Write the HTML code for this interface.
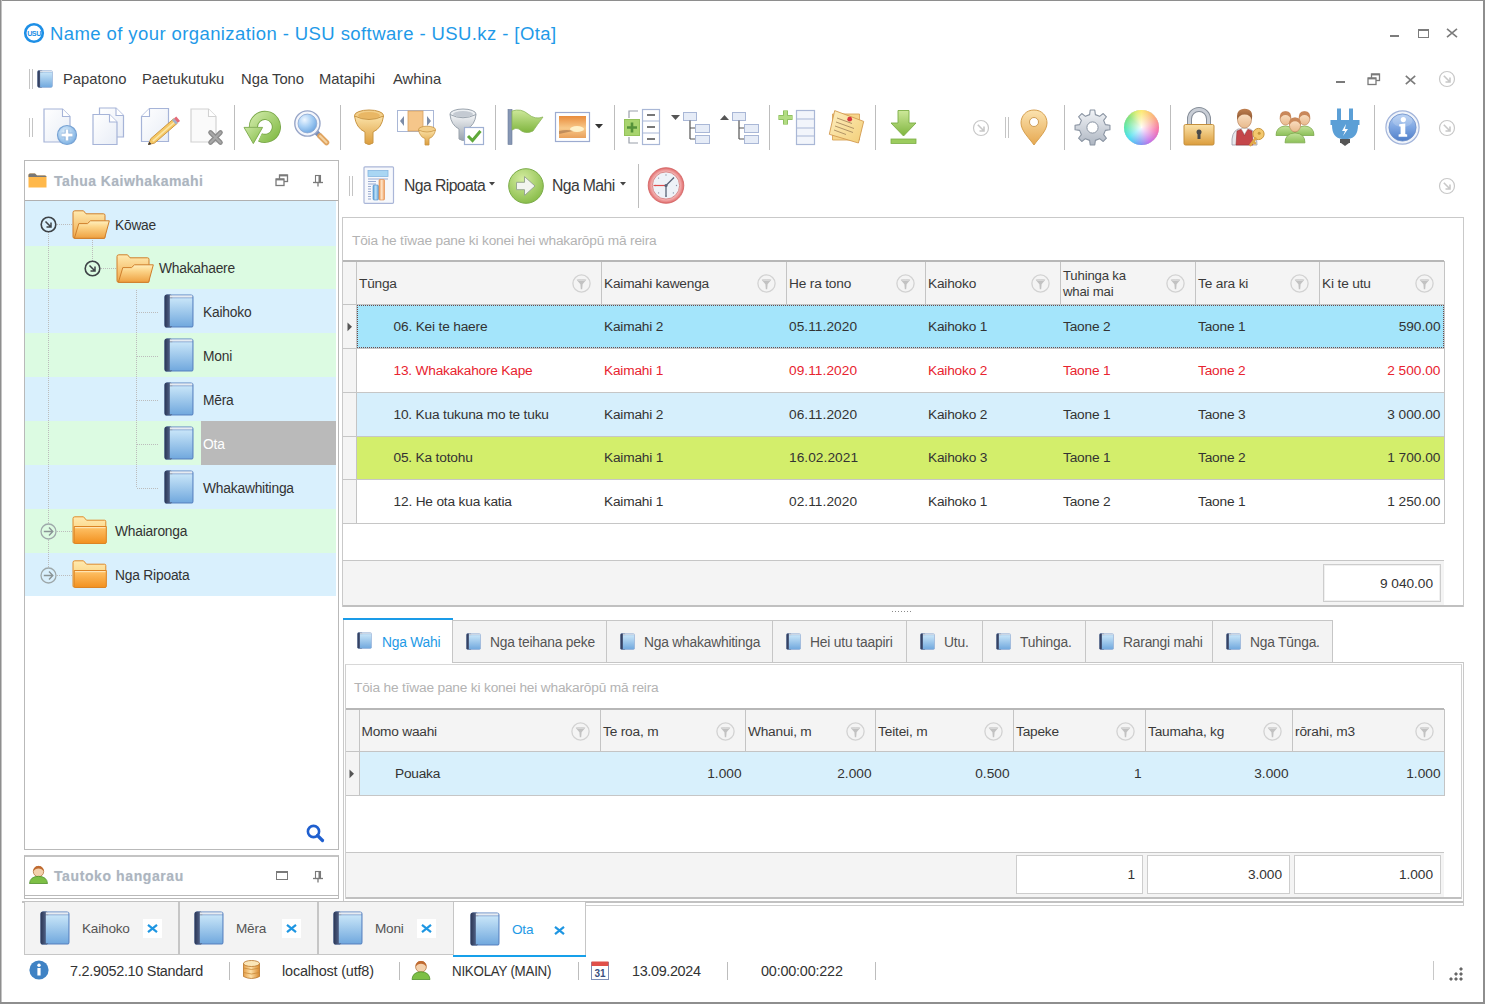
<!DOCTYPE html><html><head><meta charset="utf-8"><style>
html,body{margin:0;padding:0;} body{width:1485px;height:1004px;position:relative;overflow:hidden;background:#fff;font-family:"Liberation Sans", sans-serif;} div{box-sizing:border-box} svg{overflow:visible}
</style></head><body>
<svg width="0" height="0" style="position:absolute">
<defs>
<linearGradient id="gBook" x1="0" y1="0" x2="0" y2="1"><stop offset="0" stop-color="#c8e5f8"/><stop offset="1" stop-color="#72a9de"/></linearGradient>
<linearGradient id="gBookSp" x1="0" y1="0" x2="1" y2="0"><stop offset="0" stop-color="#2a3554"/><stop offset="0.6" stop-color="#4a5a7e"/><stop offset="1" stop-color="#3c4a6c"/></linearGradient>
<linearGradient id="gFolder" x1="0" y1="0" x2="0" y2="1"><stop offset="0" stop-color="#fde3a0"/><stop offset="1" stop-color="#f0a640"/></linearGradient>
<linearGradient id="gFolderB" x1="0" y1="0" x2="0" y2="1"><stop offset="0" stop-color="#f9cf78"/><stop offset="1" stop-color="#e88a2a"/></linearGradient>
<linearGradient id="gFolderC" x1="0" y1="0" x2="0" y2="1"><stop offset="0" stop-color="#ffd27a"/><stop offset="1" stop-color="#f39a26"/></linearGradient>
<linearGradient id="gPage" x1="0" y1="0" x2="1" y2="1"><stop offset="0" stop-color="#ffffff"/><stop offset="1" stop-color="#e8edf6"/></linearGradient>
<linearGradient id="gGreen" x1="0" y1="0" x2="0" y2="1"><stop offset="0" stop-color="#cde89a"/><stop offset="1" stop-color="#7fb53e"/></linearGradient>
<linearGradient id="gGold" x1="0" y1="0" x2="0" y2="1"><stop offset="0" stop-color="#fbe2a8"/><stop offset="1" stop-color="#dc9d3c"/></linearGradient>
<linearGradient id="gSilver" x1="0" y1="0" x2="0" y2="1"><stop offset="0" stop-color="#f4f6f8"/><stop offset="1" stop-color="#9aa3ad"/></linearGradient>
<radialGradient id="gBlueBall" cx="0.4" cy="0.35" r="0.7"><stop offset="0" stop-color="#e3f1fc"/><stop offset="1" stop-color="#78aee2"/></radialGradient>
<radialGradient id="gInfo" cx="0.5" cy="0.3" r="0.7"><stop offset="0" stop-color="#8fb8ea"/><stop offset="1" stop-color="#3d73c2"/></radialGradient>
<radialGradient id="gGreenBall" cx="0.45" cy="0.35" r="0.7"><stop offset="0" stop-color="#c8e69a"/><stop offset="1" stop-color="#6fae35"/></radialGradient>
<radialGradient id="gClock" cx="0.5" cy="0.5" r="0.5"><stop offset="0.7" stop-color="#ffffff"/><stop offset="1" stop-color="#e6e6e6"/></radialGradient>
</defs></svg>
<div style="position:absolute;left:0px;top:0px;width:1485px;height:1px;background:#8e8e8e"></div>
<div style="position:absolute;left:0px;top:0px;width:1px;height:1004px;background:#8e8e8e"></div>
<div style="position:absolute;left:1px;top:0px;width:1px;height:1004px;background:#c4c4c4"></div>
<div style="position:absolute;left:1483px;top:0px;width:2px;height:1004px;background:#8e8e8e"></div>
<div style="position:absolute;left:0px;top:1002px;width:1485px;height:2px;background:#8e8e8e"></div>
<svg style="position:absolute;left:23px;top:21.5px" width="22" height="22" viewBox="0 0 22 22"><circle cx="11" cy="11" r="8.8" fill="#fff" stroke="#1d8fe6" stroke-width="2.6"/><text x="11" y="13.6" font-size="7.2" font-weight="bold" text-anchor="middle" fill="#1d8fe6" font-family="Liberation Sans" letter-spacing="-0.5">USU</text></svg>
<div style="position:absolute;left:50px;top:24.62px;font-size:18.53px;line-height:18.53px;color:#1f9ae8;white-space:nowrap;letter-spacing:0.401px;">Name of your organization - USU software - USU.kz - [Ota]</div>
<div style="position:absolute;left:1390px;top:35px;width:9px;height:2.4px;background:#7c7c7c"></div>
<div style="position:absolute;left:1418px;top:29px;width:11px;height:9px;border:1.3px solid #7c7c7c;border-top-width:2.4px"></div>
<svg style="position:absolute;left:1446px;top:28px" width="12" height="10" viewBox="0 0 12 10"><path d="M1 0.8 L11 9.2 M11 0.8 L1 9.2" stroke="#7c7c7c" stroke-width="1.6"/></svg>
<div style="position:absolute;left:29px;top:69px;width:1px;height:20px;background:#c4c4c4"></div>
<div style="position:absolute;left:32px;top:69px;width:1px;height:20px;background:#c4c4c4"></div>
<svg style="position:absolute;left:37px;top:70px" width="16" height="18" viewBox="0 0 16 18"><rect x="0.5" y="0.5" width="15" height="17" rx="1.39" fill="#5a84c2"/>
<rect x="0.5" y="0.5" width="5.09" height="17" rx="1.39" fill="url(#gBookSp)"/>
<rect x="3.09" y="2.24" width="12.05" height="14.91" fill="url(#gBook)"/>
<rect x="3.09" y="0.69" width="12.05" height="1.23" fill="#e6ebf1"/></svg>
<div style="position:absolute;left:63px;top:72.47px;font-size:14.80px;line-height:14.80px;color:#3b3b3b;white-space:nowrap;letter-spacing:0.000px;">Papatono</div>
<div style="position:absolute;left:142px;top:72.47px;font-size:14.80px;line-height:14.80px;color:#3b3b3b;white-space:nowrap;letter-spacing:0.000px;">Paetukutuku</div>
<div style="position:absolute;left:241px;top:72.47px;font-size:14.80px;line-height:14.80px;color:#3b3b3b;white-space:nowrap;letter-spacing:0.000px;">Nga Tono</div>
<div style="position:absolute;left:319px;top:72.47px;font-size:14.80px;line-height:14.80px;color:#3b3b3b;white-space:nowrap;letter-spacing:0.000px;">Matapihi</div>
<div style="position:absolute;left:393px;top:72.47px;font-size:14.80px;line-height:14.80px;color:#3b3b3b;white-space:nowrap;letter-spacing:0.000px;">Awhina</div>
<div style="position:absolute;left:1336px;top:81px;width:9px;height:2.4px;background:#7a7a7a"></div>
<svg style="position:absolute;left:1367px;top:73px" width="14" height="13" viewBox="0 0 14 13"><rect x="4.5" y="1" width="8" height="6.5" fill="none" stroke="#7a7a7a" stroke-width="1.3"/><rect x="4.5" y="0.6" width="8" height="1.8" fill="#7a7a7a"/><rect x="1" y="5" width="8" height="6.5" fill="#fff" stroke="#7a7a7a" stroke-width="1.3"/><rect x="1" y="4.6" width="8" height="1.8" fill="#7a7a7a"/></svg>
<svg style="position:absolute;left:1405px;top:75px" width="11" height="10" viewBox="0 0 11 10"><path d="M0.8 0.8 L10.2 9.2 M10.2 0.8 L0.8 9.2" stroke="#7a7a7a" stroke-width="1.6"/></svg>
<svg style="position:absolute;left:1438px;top:70px" width="18" height="18" viewBox="0 0 18 18"><circle cx="9" cy="9" r="7.5" fill="none" stroke="#c8c8c8" stroke-width="1.2"/><path d="M5.8 5.8 L12 12 M12 7.5 L12 12 L7.5 12" stroke="#c8c8c8" stroke-width="1.6" fill="none"/></svg>
<div style="position:absolute;left:29px;top:118px;width:1px;height:19px;background:#c4c4c4"></div>
<div style="position:absolute;left:32px;top:118px;width:1px;height:19px;background:#c4c4c4"></div>
<svg style="position:absolute;left:43px;top:108px" width="36" height="38" viewBox="0 0 36 38"><path d="M1.0 1.0 L19.5 1.0 L27.0 8.5 L27.0 34.0 L1.0 34.0 Z" fill="url(#gPage)" stroke="#a6b4d8" stroke-width="1.2"/><path d="M19.5 1.0 L19.5 8.5 L27.0 8.5" fill="#fff" stroke="#a6b4d8" stroke-width="1.1"/><circle cx="24" cy="27" r="9.5" fill="url(#gBlueBall)" stroke="#78a3d4" stroke-width="1.2"/><path d="M24 21.5 V32.5 M18.5 27 H29.5" stroke="#7fa9d8" stroke-width="4.6"/><path d="M24 21.5 V32.5 M18.5 27 H29.5" stroke="#fff" stroke-width="2.8"/></svg>
<svg style="position:absolute;left:92px;top:107px" width="34" height="39" viewBox="0 0 34 39"><path d="M7.5 1.0 L24 1.0 L31.5 8.5 L31.5 30.0 L7.5 30.0 Z" fill="url(#gPage)" stroke="#a6b4d8" stroke-width="1.2"/><path d="M24 1.0 L24 8.5 L31.5 8.5" fill="#fff" stroke="#a6b4d8" stroke-width="1.1"/><path d="M1.0 7.5 L17.5 7.5 L25.0 15 L25.0 37.5 L1.0 37.5 Z" fill="url(#gPage)" stroke="#a6b4d8" stroke-width="1.2"/><path d="M17.5 7.5 L17.5 15 L25.0 15" fill="#fff" stroke="#a6b4d8" stroke-width="1.1"/></svg>
<svg style="position:absolute;left:141px;top:108px" width="36" height="38" viewBox="0 0 36 38"><path d="M8.5 0.5 L27.5 0.5 L27.5 33.5 L0.5 33.5 L0.5 8.5 Z" fill="url(#gPage)" stroke="#a6b4d8" stroke-width="1.2"/><path d="M8.5 0.5 L8.5 8.5 L0.5 8.5" fill="#fff" stroke="#a6b4d8" stroke-width="1.1"/><path d="M7.50 36.50 L13.55 35.08 L36.40 15.19 L32.60 10.81 L9.74 30.70 Z" fill="#f5c865" stroke="#c8903a" stroke-width="0.9" stroke-linejoin="round"/><path d="M11.84 33.11 L34.69 13.22" stroke="#fbe6a8" stroke-width="1.6"/><path d="M34.90 16.50 L36.78 14.86 L32.97 10.48 L31.09 12.13 Z" fill="#9fb0cc"/><path d="M36.78 14.86 L39.04 12.89 L35.24 8.51 L32.97 10.48 Z" fill="#e46a78"/><path d="M7.50 36.50 L9.88 35.89 L8.44 34.22 Z" fill="#3a3a3a" stroke="#3a3a3a" stroke-width="0.8"/></svg>
<svg style="position:absolute;left:190px;top:108px" width="34" height="38" viewBox="0 0 34 38"><path d="M1.0 1.0 L18.5 1.0 L26.0 8.5 L26.0 34.0 L1.0 34.0 Z" fill="#fafafa" stroke="#d2d2d2" stroke-width="1.2"/><path d="M18.5 1.0 L18.5 8.5 L26.0 8.5" fill="#fff" stroke="#d2d2d2" stroke-width="1.1"/><path d="M20.5 24.5 L30.5 34.5 M30.5 24.5 L20.5 34.5" stroke="#8c8c8c" stroke-width="4.6" stroke-linecap="round"/><path d="M20.5 24.5 L30.5 34.5 M30.5 24.5 L20.5 34.5" stroke="#a8a8a8" stroke-width="2" stroke-linecap="round"/></svg>
<div style="position:absolute;left:234px;top:105px;width:1px;height:45px;background:#bdbdbd"></div>
<svg style="position:absolute;left:244px;top:110px" width="38" height="36" viewBox="0 0 38 36"><defs><linearGradient id="gRef" x1="0" y1="0" x2="1" y2="1"><stop offset="0" stop-color="#c9e6a0"/><stop offset="1" stop-color="#86bd4a"/></linearGradient></defs><path d="M9.4 16.9 A11.5 11.5 0 1 1 16.04 27.32" fill="none" stroke="#7aa84a" stroke-width="9.2"/><path d="M9.4 16.9 A11.5 11.5 0 1 1 16.04 27.32" fill="none" stroke="url(#gRef)" stroke-width="7.4"/><path d="M0 17.4 L18.6 17.4 L9.3 33.6 Z" fill="url(#gRef)" stroke="#7aa84a" stroke-width="0.9" stroke-linejoin="round"/></svg>
<svg style="position:absolute;left:293px;top:109px" width="38" height="38" viewBox="0 0 38 38"><defs><radialGradient id="gLens" cx="0.35" cy="0.3" r="0.75"><stop offset="0" stop-color="#eef6ff"/><stop offset="0.5" stop-color="#a9d0f5"/><stop offset="1" stop-color="#6ea6e0"/></radialGradient></defs><path d="M22.5 22.5 L26.5 26.5" stroke="#7b8fb8" stroke-width="5" stroke-linecap="round"/><path d="M27 27 L33.5 33.5" stroke="#e0a460" stroke-width="5.5" stroke-linecap="round"/><path d="M27 27 L33.5 33.5" stroke="#f4d2a0" stroke-width="2" stroke-linecap="round"/><circle cx="14.4" cy="14.5" r="12.6" fill="#f4f6fb" stroke="#98a6c8" stroke-width="1.4"/><circle cx="14.4" cy="14.5" r="9.4" fill="url(#gLens)" stroke="#8aa6d0" stroke-width="0.8"/></svg>
<div style="position:absolute;left:340px;top:105px;width:1px;height:45px;background:#bdbdbd"></div>
<svg style="position:absolute;left:353px;top:109px" width="32" height="37" viewBox="0 0 32 37"><ellipse cx="16" cy="6.5" rx="14.5" ry="5.5" fill="#f3cf8a" stroke="#c99645" stroke-width="1"/><ellipse cx="16" cy="6.5" rx="11" ry="3.5" fill="#e9b765"/><path d="M1.5 7 Q3 19 12 23 L12 34 Q16 37 20 34 L20 23 Q29 19 30.5 7 Q16 14 1.5 7 Z" fill="url(#gGold)" stroke="#c99645" stroke-width="1"/></svg>
<svg style="position:absolute;left:397px;top:110px" width="42" height="36" viewBox="0 0 42 36"><rect x="0.5" y="0.5" width="36" height="21" fill="#fff" stroke="#a9b7d6" stroke-width="1"/><rect x="11" y="1" width="15" height="20" fill="#f5c68a" stroke="#d6a060" stroke-width="0.8"/><path d="M7 6 L3 11 L7 16 Z M30 6 L34 11 L30 16 Z" fill="#7d8da8"/><ellipse cx="30" cy="19.5" rx="8.5" ry="3.3" fill="#f3cf8a" stroke="#c99645" stroke-width="0.8"/><path d="M21.5 20 Q23 27 28 28.5 L28 35 L32 35 L32 28.5 Q37 27 38.5 20 Q30 24 21.5 20 Z" fill="url(#gGold)" stroke="#c99645" stroke-width="0.8"/></svg>
<svg style="position:absolute;left:449px;top:108px" width="36" height="38" viewBox="0 0 36 38"><ellipse cx="14" cy="6" rx="13" ry="5" fill="#eceff2" stroke="#9aa3ad" stroke-width="1"/><ellipse cx="14" cy="6" rx="10" ry="3" fill="#c4cad2"/><path d="M1 6.5 Q2 17 10 21 L10 31 Q14 34 18 31 L18 21 Q26 17 27 6.5 Q14 13 1 6.5 Z" fill="url(#gSilver)" stroke="#9aa3ad" stroke-width="1"/><rect x="15.5" y="19.5" width="19" height="17" fill="#fff" stroke="#9fb0d2" stroke-width="1.2"/><path d="M19 28 L23.5 32.5 L31.5 23" fill="none" stroke="#5fa83a" stroke-width="3"/></svg>
<div style="position:absolute;left:495px;top:105px;width:1px;height:45px;background:#bdbdbd"></div>
<svg style="position:absolute;left:507px;top:109px" width="37" height="36" viewBox="0 0 37 36"><rect x="1" y="0.5" width="4" height="35" fill="#8797b5" stroke="#6a7a98" stroke-width="0.6"/><path d="M5 2 Q14 -1 21 5 Q28 11 36 8 Q30 16 26 22 Q18 26 12 20 Q9 18 5 21 Z" fill="url(#gGreen)" stroke="#8cb55a" stroke-width="0.8"/></svg>
<svg style="position:absolute;left:555px;top:112px" width="36" height="31" viewBox="0 0 36 31"><rect x="0.5" y="0.5" width="34" height="29" fill="#fff" stroke="#9cabd0" stroke-width="1.2"/><defs><linearGradient id="gSun" x1="0" y1="0" x2="0" y2="1"><stop offset="0" stop-color="#e98c3c"/><stop offset="0.55" stop-color="#f8c98a"/><stop offset="1" stop-color="#e9a15c"/></linearGradient></defs><rect x="4" y="4" width="27" height="22" fill="url(#gSun)"/><ellipse cx="22" cy="17" rx="7" ry="3" fill="#fff6d0" opacity="0.9"/><path d="M4 19 Q12 17 18 19 L4 22 Z" fill="#a0704a" opacity="0.6"/></svg>
<svg style="position:absolute;left:595px;top:124px" width="8" height="5" viewBox="0 0 8 5"><path d="M0 0 L8 0 L4 4.5 Z" fill="#333"/></svg>
<div style="position:absolute;left:614px;top:105px;width:1px;height:45px;background:#bdbdbd"></div>
<svg style="position:absolute;left:624px;top:109px" width="37" height="37" viewBox="0 0 37 37"><path d="M14 2 L5 2 L5 9 M5 28 L5 34 L14 34" fill="none" stroke="#9aa0aa" stroke-width="1.2"/><rect x="0.5" y="10.5" width="15" height="16" fill="#a8d46e" stroke="#94c25a" stroke-width="1"/><path d="M8 13.5 V23.5 M3 18.5 H13" stroke="#55923a" stroke-width="2.6"/><rect x="18.5" y="0.5" width="17" height="35" fill="#fff" stroke="#a9b7d6" stroke-width="1.2"/><path d="M18.5 12 H35.5 M18.5 24 H35.5" stroke="#a9b7d6" stroke-width="1"/><path d="M23 6 H31 M23 18 H31 M23 30 H31" stroke="#777" stroke-width="2.2"/></svg>
<svg style="position:absolute;left:671px;top:112px" width="40" height="34" viewBox="0 0 40 34"><path d="M0 3 L9 3 L4.5 8 Z" fill="#555"/><rect x="12.5" y="0.5" width="13" height="8" fill="#e6ecf7" stroke="#a9b7d6" stroke-width="1"/><path d="M19 8.5 V27 M19 16 H24 M19 27 H24" stroke="#555" stroke-width="1.2" fill="none"/><rect x="24.5" y="12.5" width="14" height="8" fill="#e6ecf7" stroke="#a9b7d6" stroke-width="1"/><rect x="24.5" y="23.5" width="14" height="8" fill="#e6ecf7" stroke="#a9b7d6" stroke-width="1"/></svg>
<svg style="position:absolute;left:720px;top:112px" width="40" height="34" viewBox="0 0 40 34"><path d="M0 8 L9 8 L4.5 3 Z" fill="#555"/><rect x="12.5" y="0.5" width="13" height="8" fill="#e6ecf7" stroke="#a9b7d6" stroke-width="1"/><path d="M19 8.5 V27 M19 16 H24 M19 27 H24" stroke="#555" stroke-width="1.2" fill="none"/><rect x="24.5" y="12.5" width="14" height="8" fill="#e6ecf7" stroke="#a9b7d6" stroke-width="1"/><rect x="24.5" y="23.5" width="14" height="8" fill="#e6ecf7" stroke="#a9b7d6" stroke-width="1"/></svg>
<div style="position:absolute;left:769px;top:105px;width:1px;height:45px;background:#bdbdbd"></div>
<svg style="position:absolute;left:778px;top:109px" width="38" height="37" viewBox="0 0 38 37"><path d="M7.5 1.5 V15.5 M0.5 8.5 H14.5" stroke="#86b85a" stroke-width="5"/><path d="M7.5 1.5 V15.5 M0.5 8.5 H14.5" stroke="#b2dc82" stroke-width="3.4"/><rect x="18.5" y="1.5" width="18" height="34" fill="#f2f5fb" stroke="#a9b7d6" stroke-width="1.2"/><path d="M18.5 10 H36.5 M18.5 19 H36.5 M18.5 27 H36.5" stroke="#a9b7d6" stroke-width="1"/></svg>
<svg style="position:absolute;left:828px;top:109px" width="37" height="37" viewBox="0 0 37 37"><defs><linearGradient id="gNote" x1="0" y1="0" x2="1" y2="1"><stop offset="0" stop-color="#fdeec0"/><stop offset="1" stop-color="#f3cf78"/></linearGradient></defs><path d="M4.5 5 L31.5 5 L31.5 31 L4.5 31 Z" fill="#f6d58a" stroke="#d9a55a" stroke-width="0.9"/><path d="M6.7 1.6 L35.7 12.4 L30.4 34 L1.3 25.3 Z" fill="url(#gNote)" stroke="#d39a50" stroke-width="0.9"/><path d="M9 9 L24 14.5 M8 13 L26 19.5 M7 17 L25 23.5 M6 21 L18 25.5" stroke="#a88a60" stroke-width="0.9"/><circle cx="21.7" cy="10.2" r="2.4" fill="#d8343e"/></svg>
<div style="position:absolute;left:875px;top:105px;width:1px;height:45px;background:#bdbdbd"></div>
<svg style="position:absolute;left:890px;top:110px" width="27" height="34" viewBox="0 0 27 34"><path d="M8 0.5 H19 V13 H26 L13.5 26 L1 13 H8 Z" fill="url(#gGreen)" stroke="#7cae45" stroke-width="0.9"/><rect x="1" y="29" width="25" height="4.5" fill="#9ccc5e" stroke="#7cae45" stroke-width="0.8"/></svg>
<svg style="position:absolute;left:972px;top:119px" width="18" height="18" viewBox="0 0 18 18"><circle cx="9" cy="9" r="7.5" fill="none" stroke="#c8c8c8" stroke-width="1.2"/><path d="M5.8 5.8 L12 12 M12 7.5 L12 12 L7.5 12" stroke="#c8c8c8" stroke-width="1.6" fill="none"/></svg>
<div style="position:absolute;left:1005px;top:117px;width:1px;height:21px;background:#c4c4c4"></div>
<div style="position:absolute;left:1008px;top:117px;width:1px;height:21px;background:#c4c4c4"></div>
<svg style="position:absolute;left:1020px;top:109px" width="31" height="37" viewBox="0 0 31 37"><defs><linearGradient id="gPin" x1="0" y1="0" x2="0" y2="1"><stop offset="0" stop-color="#fbe3b0"/><stop offset="1" stop-color="#e6a850"/></linearGradient></defs><path d="M14 1 C6 1 1 7 1 14 C1 22 10 30 14 36 C18 30 27 22 27 14 C27 7 22 1 14 1 Z" fill="url(#gPin)" stroke="#d6a050" stroke-width="1"/><circle cx="14" cy="13" r="4.5" fill="#fff" stroke="#c28a3a" stroke-width="0.8"/></svg>
<div style="position:absolute;left:1064px;top:105px;width:1px;height:45px;background:#bdbdbd"></div>
<svg style="position:absolute;left:1074px;top:109px" width="38" height="38" viewBox="0 0 38 38"><defs><linearGradient id="gGear" x1="0" y1="0" x2="0" y2="1"><stop offset="0" stop-color="#f2f4f7"/><stop offset="1" stop-color="#aeb6c2"/></linearGradient></defs><path d="M31.38 15.62 L35.95 16.22 L35.95 20.78 L31.38 21.38 L29.65 25.57 L32.45 29.23 L29.23 32.45 L25.57 29.65 L21.38 31.38 L20.78 35.95 L16.22 35.95 L15.62 31.38 L11.43 29.65 L7.77 32.45 L4.55 29.23 L7.35 25.57 L5.62 21.38 L1.05 20.78 L1.05 16.22 L5.62 15.62 L7.35 11.43 L4.55 7.77 L7.77 4.55 L11.43 7.35 L15.62 5.62 L16.22 1.05 L20.78 1.05 L21.38 5.62 L25.57 7.35 L29.23 4.55 L32.45 7.77 L29.65 11.43 Z" fill="url(#gGear)" stroke="#8a94a2" stroke-width="1.1" stroke-linejoin="round"/><circle cx="18.5" cy="18.5" r="5.6" fill="#fff" stroke="#8a94a2" stroke-width="1"/></svg>
<div style="position:absolute;left:1124px;top:110px;width:35px;height:35px;border-radius:50%;background:radial-gradient(circle at 50% 50%,rgba(255,255,255,0.95) 0,rgba(255,255,255,0.55) 30%,rgba(255,255,255,0) 72%),conic-gradient(from 0deg,#fde86a,#fbb070 45deg,#f56aa8 100deg,#c06ae8 150deg,#6a9cf5 190deg,#40dcf0 230deg,#50e6a8 270deg,#7ee070 310deg,#d8ec6a 340deg,#fde86a);box-shadow:0 0 0.5px #999"></div>
<div style="position:absolute;left:1170px;top:105px;width:1px;height:45px;background:#bdbdbd"></div>
<svg style="position:absolute;left:1183px;top:108px" width="32" height="38" viewBox="0 0 32 38"><path d="M6.5 17 V11 A9.5 9.5 0 0 1 25.5 11 V17" fill="none" stroke="#858d98" stroke-width="5"/><path d="M6.5 17 V11 A9.5 9.5 0 0 1 25.5 11 V17" fill="none" stroke="#c9ced6" stroke-width="3"/><rect x="1" y="16.5" width="30" height="20.5" rx="1.5" fill="url(#gGold)" stroke="#c48f3c" stroke-width="1"/><circle cx="16" cy="24" r="2.5" fill="#4a4a4a"/><rect x="14.5" y="24" width="3" height="7" fill="#4a4a4a"/></svg>
<svg style="position:absolute;left:1229px;top:108px" width="38" height="38" viewBox="0 0 38 38"><defs><linearGradient id="gFace" x1="0" y1="0" x2="0" y2="1"><stop offset="0" stop-color="#fde6cc"/><stop offset="1" stop-color="#e8b98c"/></linearGradient><linearGradient id="gHair" x1="0" y1="0" x2="0" y2="1"><stop offset="0" stop-color="#c08050"/><stop offset="1" stop-color="#8a5430"/></linearGradient></defs><path d="M3 37 Q2 24 9 21 L21 21 Q28 24 28 37 Z" fill="#e8e8ec" stroke="#9a9aa8" stroke-width="0.8"/><path d="M7 37 L8 23 L13 21 L15.5 28 L18 21 L23 23 L24 37 Z" fill="#c4464a" stroke="#9a3236" stroke-width="0.6"/><path d="M12 20.5 L15.5 26 L19 20.5 Z" fill="#fff" stroke="#bbb" stroke-width="0.5"/><ellipse cx="15.5" cy="11.5" rx="7" ry="8.5" fill="url(#gFace)" stroke="#b88058" stroke-width="0.7"/><path d="M8.3 12 Q7 3 12 1.5 Q16 0 20 1.8 Q24.5 4 22.8 12 Q21.5 6.5 15.5 6.5 Q10 6.5 8.3 12 Z" fill="url(#gHair)"/><circle cx="29.5" cy="26" r="5.6" fill="#f3c86e" stroke="#c8963c" stroke-width="1"/><circle cx="30.2" cy="25.2" r="1.5" fill="#c8963c"/><path d="M26.5 30.5 L21.5 37 M24 33.6 L26 35.2" stroke="#e0a848" stroke-width="2.6" stroke-linecap="round"/></svg>
<svg style="position:absolute;left:1276px;top:110px" width="40" height="35" viewBox="0 0 40 35"><defs><linearGradient id="gBody" x1="0" y1="0" x2="0" y2="1"><stop offset="0" stop-color="#c4e29a"/><stop offset="1" stop-color="#8cc058"/></linearGradient></defs><path d="M0.00 25.50 Q0.00 16.50 9.50 16.00 Q19.00 16.50 19.00 25.50 Z" fill="url(#gBody)" stroke="#7eaa4e" stroke-width="0.8"/><ellipse cx="9.50" cy="8.50" rx="5.30" ry="6.60" fill="url(#gFace)" stroke="#b88058" stroke-width="0.6"/><path d="M3.90 9.50 Q3.00 1.00 9.50 1.30 Q16.00 1.00 15.10 9.50 Q13.50 5.00 9.50 5.00 Q5.50 5.00 3.90 9.50 Z" fill="#c9885a"/><path d="M19.00 25.50 Q19.00 16.50 28.50 16.00 Q38.00 16.50 38.00 25.50 Z" fill="url(#gBody)" stroke="#7eaa4e" stroke-width="0.8"/><ellipse cx="28.50" cy="8.50" rx="5.30" ry="6.60" fill="url(#gFace)" stroke="#b88058" stroke-width="0.6"/><path d="M22.90 9.50 Q22.00 1.00 28.50 1.30 Q35.00 1.00 34.10 9.50 Q32.50 5.00 28.50 5.00 Q24.50 5.00 22.90 9.50 Z" fill="#c9885a"/><path d="M9.03 32.85 Q9.03 23.40 19.00 22.88 Q28.98 23.40 28.98 32.85 Z" fill="url(#gBody)" stroke="#7eaa4e" stroke-width="0.8"/><ellipse cx="19.00" cy="15.00" rx="5.57" ry="6.93" fill="url(#gFace)" stroke="#b88058" stroke-width="0.6"/><path d="M13.12 16.05 Q12.18 7.12 19.00 7.44 Q25.82 7.12 24.88 16.05 Q23.20 11.32 19.00 11.32 Q14.80 11.32 13.12 16.05 Z" fill="#c9885a"/></svg>
<svg style="position:absolute;left:1330px;top:108px" width="30" height="39" viewBox="0 0 30 39"><rect x="7" y="0.5" width="4" height="12" fill="#5b9fd6"/><rect x="19" y="0.5" width="4" height="12" fill="#5b9fd6"/><path d="M0.5 12 H29.5 V17 H28 Q28 30 18 31 L12 31 Q2 30 2 17 H0.5 Z" fill="#5b9fd6"/><path d="M16 16 L12 23 L15 23 L13 28 L18 21 L15 21 Z" fill="#fff"/><rect x="10" y="31" width="10" height="4" fill="#555"/><path d="M11 35 L19 35 L15 38 Z" fill="#555"/></svg>
<div style="position:absolute;left:1374px;top:105px;width:1px;height:45px;background:#bdbdbd"></div>
<svg style="position:absolute;left:1385px;top:110px" width="35" height="35" viewBox="0 0 35 35"><defs><linearGradient id="gInf2" x1="0" y1="0" x2="0" y2="1"><stop offset="0" stop-color="#b2cdf2"/><stop offset="0.5" stop-color="#7ea6e2"/><stop offset="1" stop-color="#4f7ec8"/></linearGradient></defs><circle cx="17.5" cy="17.5" r="16.6" fill="#f0f4fa" stroke="#a2b4da" stroke-width="1.2"/><circle cx="17.5" cy="17.5" r="13.6" fill="url(#gInf2)" stroke="#6e8fc8" stroke-width="0.8"/><ellipse cx="17.5" cy="11" rx="10" ry="6" fill="#fff" opacity="0.18"/><circle cx="18.3" cy="9.6" r="2.6" fill="#fff"/><path d="M14.2 14.2 L20.3 13.6 L20.3 24 L22.2 24.6 L22.2 26.8 L13.6 26.8 L13.6 24.6 L15.6 24 L15.6 16.6 L14.2 16.2 Z" fill="#fff"/></svg>
<svg style="position:absolute;left:1438px;top:119px" width="18" height="18" viewBox="0 0 18 18"><circle cx="9" cy="9" r="7.5" fill="none" stroke="#c8c8c8" stroke-width="1.2"/><path d="M5.8 5.8 L12 12 M12 7.5 L12 12 L7.5 12" stroke="#c8c8c8" stroke-width="1.6" fill="none"/></svg>
<div style="position:absolute;left:24px;top:160px;width:315px;height:690px;border:1px solid #b9b9b9;background:#fff"></div>
<div style="position:absolute;left:25px;top:200px;width:313px;height:1px;background:#b0b0b0"></div>
<svg style="position:absolute;left:28px;top:173px" width="19" height="15" viewBox="0 0 19 15"><path d="M0.5 2 Q0.5 0.5 2 0.5 L7 0.5 L9 2.5 L17 2.5 Q18.5 2.5 18.5 4 L18.5 14.5 L0.5 14.5 Z" fill="#ffb84a"/><path d="M0.5 2 Q0.5 0.5 2 0.5 L7 0.5 L9 2.5 L17 2.5 Q18.5 2.5 18.5 4 L0.5 4 Z" fill="#777"/></svg>
<div style="position:absolute;left:54px;top:174.15px;font-size:14.00px;line-height:14.00px;color:#adb5bf;white-space:nowrap;font-weight:bold;letter-spacing:0.450px;text-shadow:0 0 1px #dce3ea">Tahua Kaiwhakamahi</div>
<svg style="position:absolute;left:275px;top:174px" width="14" height="13" viewBox="0 0 14 13"><rect x="4.5" y="1" width="8" height="6.5" fill="none" stroke="#7a7a7a" stroke-width="1.3"/><rect x="4.5" y="0.6" width="8" height="1.8" fill="#7a7a7a"/><rect x="1" y="5" width="8" height="6.5" fill="#fff" stroke="#7a7a7a" stroke-width="1.3"/><rect x="1" y="4.6" width="8" height="1.8" fill="#7a7a7a"/></svg>
<svg style="position:absolute;left:313px;top:175px" width="10" height="12" viewBox="0 0 10 12"><rect x="2.5" y="0.5" width="5" height="7" fill="#fff" stroke="#7a7a7a" stroke-width="1.1"/><rect x="5.5" y="0.5" width="2" height="7" fill="#7a7a7a"/><path d="M0 7.5 H10" stroke="#7a7a7a" stroke-width="1.3"/><path d="M5 8 V11.5" stroke="#7a7a7a" stroke-width="1.3"/></svg>
<div style="position:absolute;left:25px;top:201px;width:311px;height:45px;background:#d9f0fd"></div>
<div style="position:absolute;left:25px;top:246px;width:311px;height:43px;background:#dcfbe2"></div>
<div style="position:absolute;left:25px;top:289px;width:311px;height:44px;background:#d9f0fd"></div>
<div style="position:absolute;left:25px;top:333px;width:311px;height:44px;background:#dcfbe2"></div>
<div style="position:absolute;left:25px;top:377px;width:311px;height:44px;background:#d9f0fd"></div>
<div style="position:absolute;left:25px;top:421px;width:311px;height:44px;background:#dcfbe2"></div>
<div style="position:absolute;left:25px;top:465px;width:311px;height:44px;background:#d9f0fd"></div>
<div style="position:absolute;left:25px;top:509px;width:311px;height:44px;background:#dcfbe2"></div>
<div style="position:absolute;left:25px;top:553px;width:311px;height:43px;background:#d9f0fd"></div>
<div style="position:absolute;left:201px;top:421px;width:135px;height:44px;background:#bababa"></div>
<div style="position:absolute;left:48px;top:232px;width:1px;height:343px;background:repeating-linear-gradient(to bottom,#bcbcbc 0 1px,transparent 1px 2px)"></div>
<div style="position:absolute;left:57px;top:224px;width:15px;height:1px;background:repeating-linear-gradient(to right,#bcbcbc 0 1px,transparent 1px 2px)"></div>
<div style="position:absolute;left:92px;top:240px;width:1px;height:22px;background:repeating-linear-gradient(to bottom,#bcbcbc 0 1px,transparent 1px 2px)"></div>
<div style="position:absolute;left:101px;top:268px;width:15px;height:1px;background:repeating-linear-gradient(to right,#bcbcbc 0 1px,transparent 1px 2px)"></div>
<div style="position:absolute;left:136px;top:290px;width:1px;height:198px;background:repeating-linear-gradient(to bottom,#bcbcbc 0 1px,transparent 1px 2px)"></div>
<div style="position:absolute;left:137px;top:312px;width:21px;height:1px;background:repeating-linear-gradient(to right,#bcbcbc 0 1px,transparent 1px 2px)"></div>
<div style="position:absolute;left:137px;top:356px;width:21px;height:1px;background:repeating-linear-gradient(to right,#bcbcbc 0 1px,transparent 1px 2px)"></div>
<div style="position:absolute;left:137px;top:400px;width:21px;height:1px;background:repeating-linear-gradient(to right,#bcbcbc 0 1px,transparent 1px 2px)"></div>
<div style="position:absolute;left:137px;top:444px;width:21px;height:1px;background:repeating-linear-gradient(to right,#bcbcbc 0 1px,transparent 1px 2px)"></div>
<div style="position:absolute;left:137px;top:488px;width:21px;height:1px;background:repeating-linear-gradient(to right,#bcbcbc 0 1px,transparent 1px 2px)"></div>
<div style="position:absolute;left:57px;top:531px;width:15px;height:1px;background:repeating-linear-gradient(to right,#bcbcbc 0 1px,transparent 1px 2px)"></div>
<div style="position:absolute;left:57px;top:575px;width:15px;height:1px;background:repeating-linear-gradient(to right,#bcbcbc 0 1px,transparent 1px 2px)"></div>
<svg style="position:absolute;left:39.5px;top:215.5px" width="17" height="17" viewBox="0 0 17 17"><circle cx="8.5" cy="8.5" r="7.3" fill="#d9f0fd" stroke="#3d4246" stroke-width="1.6"/><path d="M5.5 5.5 L11 11 M11 6.5 L11 11 L6.5 11" stroke="#3d4246" stroke-width="1.5" fill="none"/></svg>
<svg style="position:absolute;left:83.5px;top:259.5px" width="17" height="17" viewBox="0 0 17 17"><circle cx="8.5" cy="8.5" r="7.3" fill="#dcfbe2" stroke="#3d4246" stroke-width="1.6"/><path d="M5.5 5.5 L11 11 M11 6.5 L11 11 L6.5 11" stroke="#3d4246" stroke-width="1.5" fill="none"/></svg>
<svg style="position:absolute;left:39.5px;top:522.5px" width="17" height="17" viewBox="0 0 17 17"><circle cx="8.5" cy="8.5" r="7.5" fill="#dcfbe2" stroke="#9ea8aa" stroke-width="1.3"/><path d="M3.8 8.5 L12.8 8.5 M9 4.6 L12.8 8.5 L9 12.4" stroke="#8a9496" stroke-width="1.4" fill="none"/></svg>
<svg style="position:absolute;left:39.5px;top:566.5px" width="17" height="17" viewBox="0 0 17 17"><circle cx="8.5" cy="8.5" r="7.5" fill="#d9f0fd" stroke="#9ea8aa" stroke-width="1.3"/><path d="M3.8 8.5 L12.8 8.5 M9 4.6 L12.8 8.5 L9 12.4" stroke="#8a9496" stroke-width="1.4" fill="none"/></svg>
<svg style="position:absolute;left:72px;top:210px" width="38" height="29" viewBox="0 0 38 29"><defs><linearGradient id="gFoBack" x1="0" y1="0" x2="0" y2="1"><stop offset="0" stop-color="#ffeab0"/><stop offset="1" stop-color="#f0a848"/></linearGradient><linearGradient id="gFoFront" x1="0" y1="0" x2="0" y2="1"><stop offset="0" stop-color="#fff0c0"/><stop offset="0.35" stop-color="#fcd488"/><stop offset="1" stop-color="#eea040"/></linearGradient></defs>
<path d="M1 2.6 Q1 0.8 2.8 0.8 L11.5 0.8 L14 3.8 L31.5 3.8 Q33 3.8 33 5.3 L33 27 Q33 28.3 31.6 28.3 L2.6 28.3 Q1 28.3 1 26.8 Z" fill="url(#gFoBack)" stroke="#cf7f2c" stroke-width="1"/>
<path d="M6.8 13.6 L15.5 13.6 L18.5 10.8 L37.3 10.8 L32.6 28.3 L2.4 28.3 Z" fill="url(#gFoFront)" stroke="#cf7f2c" stroke-width="1" stroke-linejoin="round"/></svg>
<svg style="position:absolute;left:116px;top:254px" width="38" height="29" viewBox="0 0 38 29"><defs><linearGradient id="gFoBack" x1="0" y1="0" x2="0" y2="1"><stop offset="0" stop-color="#ffeab0"/><stop offset="1" stop-color="#f0a848"/></linearGradient><linearGradient id="gFoFront" x1="0" y1="0" x2="0" y2="1"><stop offset="0" stop-color="#fff0c0"/><stop offset="0.35" stop-color="#fcd488"/><stop offset="1" stop-color="#eea040"/></linearGradient></defs>
<path d="M1 2.6 Q1 0.8 2.8 0.8 L11.5 0.8 L14 3.8 L31.5 3.8 Q33 3.8 33 5.3 L33 27 Q33 28.3 31.6 28.3 L2.6 28.3 Q1 28.3 1 26.8 Z" fill="url(#gFoBack)" stroke="#cf7f2c" stroke-width="1"/>
<path d="M6.8 13.6 L15.5 13.6 L18.5 10.8 L37.3 10.8 L32.6 28.3 L2.4 28.3 Z" fill="url(#gFoFront)" stroke="#cf7f2c" stroke-width="1" stroke-linejoin="round"/></svg>
<svg style="position:absolute;left:164px;top:294px" width="30" height="34" viewBox="0 0 30 34"><rect x="0.5" y="0.5" width="29" height="33" rx="2.60" fill="#5a84c2"/>
<rect x="0.5" y="0.5" width="7.80" height="33" rx="2.60" fill="url(#gBookSp)"/>
<rect x="5.80" y="4.20" width="22.60" height="28.20" fill="url(#gBook)"/>
<rect x="5.80" y="1.30" width="22.60" height="2.30" fill="#e6ebf1"/></svg>
<div style="position:absolute;left:203px;top:306.32px;font-size:13.80px;line-height:13.80px;color:#333;white-space:nowrap;letter-spacing:-0.210px;">Kaihoko</div>
<svg style="position:absolute;left:164px;top:338px" width="30" height="34" viewBox="0 0 30 34"><rect x="0.5" y="0.5" width="29" height="33" rx="2.60" fill="#5a84c2"/>
<rect x="0.5" y="0.5" width="7.80" height="33" rx="2.60" fill="url(#gBookSp)"/>
<rect x="5.80" y="4.20" width="22.60" height="28.20" fill="url(#gBook)"/>
<rect x="5.80" y="1.30" width="22.60" height="2.30" fill="#e6ebf1"/></svg>
<div style="position:absolute;left:203px;top:350.32px;font-size:13.80px;line-height:13.80px;color:#333;white-space:nowrap;letter-spacing:-0.220px;">Moni</div>
<svg style="position:absolute;left:164px;top:382px" width="30" height="34" viewBox="0 0 30 34"><rect x="0.5" y="0.5" width="29" height="33" rx="2.60" fill="#5a84c2"/>
<rect x="0.5" y="0.5" width="7.80" height="33" rx="2.60" fill="url(#gBookSp)"/>
<rect x="5.80" y="4.20" width="22.60" height="28.20" fill="url(#gBook)"/>
<rect x="5.80" y="1.30" width="22.60" height="2.30" fill="#e6ebf1"/></svg>
<div style="position:absolute;left:203px;top:394.32px;font-size:13.80px;line-height:13.80px;color:#333;white-space:nowrap;letter-spacing:-0.231px;">Mēra</div>
<svg style="position:absolute;left:164px;top:426px" width="30" height="34" viewBox="0 0 30 34"><rect x="0.5" y="0.5" width="29" height="33" rx="2.60" fill="#5a84c2"/>
<rect x="0.5" y="0.5" width="7.80" height="33" rx="2.60" fill="url(#gBookSp)"/>
<rect x="5.80" y="4.20" width="22.60" height="28.20" fill="url(#gBook)"/>
<rect x="5.80" y="1.30" width="22.60" height="2.30" fill="#e6ebf1"/></svg>
<div style="position:absolute;left:203px;top:438.32px;font-size:13.80px;line-height:13.80px;color:#fff;white-space:nowrap;letter-spacing:-0.218px;">Ota</div>
<svg style="position:absolute;left:164px;top:470px" width="30" height="34" viewBox="0 0 30 34"><rect x="0.5" y="0.5" width="29" height="33" rx="2.60" fill="#5a84c2"/>
<rect x="0.5" y="0.5" width="7.80" height="33" rx="2.60" fill="url(#gBookSp)"/>
<rect x="5.80" y="4.20" width="22.60" height="28.20" fill="url(#gBook)"/>
<rect x="5.80" y="1.30" width="22.60" height="2.30" fill="#e6ebf1"/></svg>
<div style="position:absolute;left:203px;top:482.32px;font-size:13.80px;line-height:13.80px;color:#333;white-space:nowrap;letter-spacing:-0.212px;">Whakawhitinga</div>
<div style="position:absolute;left:115px;top:218.82px;font-size:13.80px;line-height:13.80px;color:#333;white-space:nowrap;letter-spacing:-0.248px;">Kōwae</div>
<div style="position:absolute;left:159px;top:262.32px;font-size:13.80px;line-height:13.80px;color:#333;white-space:nowrap;letter-spacing:-0.230px;">Whakahaere</div>
<svg style="position:absolute;left:72px;top:516px" width="35" height="28" viewBox="0 0 35 28"><defs><linearGradient id="gFcBack" x1="0" y1="0" x2="0" y2="1"><stop offset="0" stop-color="#ffeab0"/><stop offset="1" stop-color="#f8c260"/></linearGradient><linearGradient id="gFcFront" x1="0" y1="0" x2="0" y2="1"><stop offset="0" stop-color="#ffc46a"/><stop offset="1" stop-color="#f2901e"/></linearGradient></defs>
<path d="M1 2.5 Q1 0.8 2.8 0.8 L11.5 0.8 L14.5 4.2 L32.5 4.2 Q33.8 4.2 33.8 5.5 L33.8 26 Q33.8 27.3 32.5 27.3 L2.5 27.3 Q1 27.3 1 26 Z" fill="url(#gFcBack)" stroke="#df8a2a" stroke-width="1"/>
<path d="M2.2 10.5 L34.3 10.5 L34.3 26.2 Q34.3 27.5 33 27.5 L3.5 27.5 Q2.2 27.5 2.2 26.2 Z" fill="url(#gFcFront)" stroke="#dc8424" stroke-width="1"/>
<path d="M3 11.6 L33.5 11.6" stroke="#ffe3b0" stroke-width="1.2"/></svg>
<svg style="position:absolute;left:72px;top:560px" width="35" height="28" viewBox="0 0 35 28"><defs><linearGradient id="gFcBack" x1="0" y1="0" x2="0" y2="1"><stop offset="0" stop-color="#ffeab0"/><stop offset="1" stop-color="#f8c260"/></linearGradient><linearGradient id="gFcFront" x1="0" y1="0" x2="0" y2="1"><stop offset="0" stop-color="#ffc46a"/><stop offset="1" stop-color="#f2901e"/></linearGradient></defs>
<path d="M1 2.5 Q1 0.8 2.8 0.8 L11.5 0.8 L14.5 4.2 L32.5 4.2 Q33.8 4.2 33.8 5.5 L33.8 26 Q33.8 27.3 32.5 27.3 L2.5 27.3 Q1 27.3 1 26 Z" fill="url(#gFcBack)" stroke="#df8a2a" stroke-width="1"/>
<path d="M2.2 10.5 L34.3 10.5 L34.3 26.2 Q34.3 27.5 33 27.5 L3.5 27.5 Q2.2 27.5 2.2 26.2 Z" fill="url(#gFcFront)" stroke="#dc8424" stroke-width="1"/>
<path d="M3 11.6 L33.5 11.6" stroke="#ffe3b0" stroke-width="1.2"/></svg>
<div style="position:absolute;left:115px;top:525.32px;font-size:13.80px;line-height:13.80px;color:#333;white-space:nowrap;letter-spacing:-0.219px;">Whaiaronga</div>
<div style="position:absolute;left:115px;top:569.32px;font-size:13.80px;line-height:13.80px;color:#333;white-space:nowrap;letter-spacing:-0.205px;">Nga Ripoata</div>
<svg style="position:absolute;left:306px;top:824px" width="20" height="20" viewBox="0 0 20 20"><circle cx="7.5" cy="7.5" r="5.6" fill="none" stroke="#1f5fcf" stroke-width="2.6"/><path d="M11.5 11.5 L16.5 16.5" stroke="#1f5fcf" stroke-width="3.2" stroke-linecap="round"/></svg>
<div style="position:absolute;left:24px;top:855px;width:315px;height:44px;border:1px solid #b9b9b9;border-top:2px solid #c4c4c4;border-bottom:none;background:#fff"></div>
<div style="position:absolute;left:24px;top:895px;width:315px;height:1px;background:#b9b9b9"></div>
<div style="position:absolute;left:24px;top:898px;width:315px;height:1px;background:#b9b9b9"></div>
<svg style="position:absolute;left:29px;top:865px" width="20" height="20" viewBox="0 0 20 20"><circle cx="9.5" cy="6.5" r="5.2" fill="#f3d1ad" stroke="#b77a45" stroke-width="0.8"/><path d="M4.3 6.5 Q4.5 1 9.5 1 Q14.5 1 14.7 6.5 Q13 3.5 9.5 3.5 Q6 3.5 4.3 6.5 Z" fill="#c06a30"/><path d="M0.5 18.5 Q1 11.5 9.5 11.3 Q18 11.5 18.5 18.5 Z" fill="#7dbf45" stroke="#4f8f2a" stroke-width="0.8"/></svg>
<div style="position:absolute;left:54px;top:869.15px;font-size:14.00px;line-height:14.00px;color:#adb5bf;white-space:nowrap;font-weight:bold;letter-spacing:0.600px;text-shadow:0 0 1px #dce3ea">Tautoko hangarau</div>
<div style="position:absolute;left:276px;top:871px;width:12px;height:9px;border:1.3px solid #7a7a7a;border-top-width:2.2px"></div>
<svg style="position:absolute;left:313px;top:871px" width="10" height="12" viewBox="0 0 10 12"><rect x="2.5" y="0.5" width="5" height="7" fill="#fff" stroke="#7a7a7a" stroke-width="1.1"/><rect x="5.5" y="0.5" width="2" height="7" fill="#7a7a7a"/><path d="M0 7.5 H10" stroke="#7a7a7a" stroke-width="1.3"/><path d="M5 8 V11.5" stroke="#7a7a7a" stroke-width="1.3"/></svg>
<div style="position:absolute;left:349px;top:176px;width:1px;height:20px;background:#c4c4c4"></div>
<div style="position:absolute;left:352px;top:176px;width:1px;height:20px;background:#c4c4c4"></div>
<svg style="position:absolute;left:363px;top:166px" width="32" height="38" viewBox="0 0 32 38"><defs><linearGradient id="gBarB" x1="0" y1="0" x2="1" y2="0"><stop offset="0" stop-color="#5a9fd8"/><stop offset="0.5" stop-color="#bfe2f8"/><stop offset="1" stop-color="#5a9fd8"/></linearGradient><linearGradient id="gBarO" x1="0" y1="0" x2="1" y2="0"><stop offset="0" stop-color="#ee9a58"/><stop offset="0.5" stop-color="#fde6cc"/><stop offset="1" stop-color="#ee9a58"/></linearGradient></defs><rect x="1" y="0.8" width="29.5" height="36.5" rx="1" fill="#f6f8fc" stroke="#aab6d8" stroke-width="1.2"/><rect x="5" y="4.5" width="20" height="6" fill="#a9d6f3" stroke="#86b6e0" stroke-width="0.8"/><path d="M5 13 H25 M5 15.5 H13 M5 18 H13 M5 20.5 H8 M5 23 H8 M5 25.5 H8 M5 28 H8 M5 30.5 H8 M5 33 H8" stroke="#8ea2cc" stroke-width="0.9"/><rect x="10" y="19" width="5.5" height="15" rx="1.2" fill="url(#gBarB)" stroke="#4f8cc8" stroke-width="0.6"/><rect x="16" y="13.5" width="5.5" height="20.5" rx="1" fill="url(#gBarO)" stroke="#e08a48" stroke-width="0.6"/></svg>
<div style="position:absolute;left:404px;top:178.15px;font-size:15.77px;line-height:15.77px;color:#3a3a3a;white-space:nowrap;letter-spacing:-0.584px;">Nga Ripoata</div>
<svg style="position:absolute;left:489px;top:182px" width="6" height="4" viewBox="0 0 6 4"><path d="M0 0 L6 0 L3 3.5 Z" fill="#444"/></svg>
<svg style="position:absolute;left:508px;top:168px" width="36" height="36" viewBox="0 0 36 36"><defs><radialGradient id="gGA" cx="0.4" cy="0.3" r="0.75"><stop offset="0" stop-color="#d4eca0"/><stop offset="1" stop-color="#86bb46"/></radialGradient></defs><circle cx="18" cy="18" r="17.3" fill="url(#gGA)" stroke="#7aab48" stroke-width="1"/><path d="M8.5 14.3 H16.5 V8.5 L27 18 L16.5 27.5 V21.7 H8.5 Z" fill="#f2f4f0" stroke="#98a890" stroke-width="1" stroke-linejoin="round"/></svg>
<div style="position:absolute;left:552px;top:178.15px;font-size:15.77px;line-height:15.77px;color:#3a3a3a;white-space:nowrap;letter-spacing:-0.619px;">Nga Mahi</div>
<svg style="position:absolute;left:620px;top:182px" width="6" height="4" viewBox="0 0 6 4"><path d="M0 0 L6 0 L3 3.5 Z" fill="#444"/></svg>
<div style="position:absolute;left:638px;top:164px;width:1px;height:44px;background:#bdbdbd"></div>
<svg style="position:absolute;left:647px;top:167px" width="38" height="38" viewBox="0 0 38 38"><defs><radialGradient id="gCR" cx="0.5" cy="0.5" r="0.5"><stop offset="0.75" stop-color="#f7c0c0"/><stop offset="1" stop-color="#e06a6a"/></radialGradient></defs><circle cx="19" cy="18.5" r="17.8" fill="url(#gCR)" stroke="#d06060" stroke-width="0.8"/><circle cx="19" cy="18.5" r="13.6" fill="#eef2f8" stroke="#d98a8a" stroke-width="1"/><circle cx="29.50" cy="18.50" r="0.7" fill="#8a96a8"/><circle cx="26.42" cy="25.92" r="0.7" fill="#8a96a8"/><circle cx="19.00" cy="29.00" r="0.7" fill="#8a96a8"/><circle cx="11.58" cy="25.92" r="0.7" fill="#8a96a8"/><circle cx="8.50" cy="18.50" r="0.7" fill="#8a96a8"/><circle cx="11.58" cy="11.08" r="0.7" fill="#8a96a8"/><circle cx="19.00" cy="8.00" r="0.7" fill="#8a96a8"/><circle cx="26.42" cy="11.08" r="0.7" fill="#8a96a8"/><path d="M19 18.5 L27 10.5 M19 18.5 L19 30" stroke="#5a6578" stroke-width="1.3"/><path d="M6.5 18.5 L19 18.5" stroke="#e04a4a" stroke-width="1.2"/><circle cx="19" cy="18.5" r="1.6" fill="#5a6578"/></svg>
<svg style="position:absolute;left:1438px;top:177px" width="18" height="18" viewBox="0 0 18 18"><circle cx="9" cy="9" r="7.5" fill="none" stroke="#c8c8c8" stroke-width="1.2"/><path d="M5.8 5.8 L12 12 M12 7.5 L12 12 L7.5 12" stroke="#c8c8c8" stroke-width="1.6" fill="none"/></svg>
<div style="position:absolute;left:342px;top:217px;width:1122px;height:390px;border:1px solid #c9c9c9;background:#fff"></div>
<div style="position:absolute;left:352px;top:233.60px;font-size:13.70px;line-height:13.70px;color:#b3b3b3;white-space:nowrap;letter-spacing:-0.179px;">Tōia he tīwae pane ki konei hei whakarōpū mā reira</div>
<div style="position:absolute;left:343px;top:261px;width:1101px;height:44px;background:#f4f4f4"></div>
<div style="position:absolute;left:343px;top:260px;width:1101px;height:2px;background:#b7b7b7"></div>
<div style="position:absolute;left:343px;top:304px;width:1101px;height:1px;background:#c4c4c4"></div>
<div style="position:absolute;left:1444px;top:261px;width:1px;height:263px;background:#c4c4c4"></div>
<div style="position:absolute;left:356px;top:262px;width:1px;height:262px;background:#c4c4c4"></div>
<div style="position:absolute;left:601px;top:262px;width:1px;height:42px;background:#c4c4c4"></div>
<div style="position:absolute;left:786px;top:262px;width:1px;height:42px;background:#c4c4c4"></div>
<div style="position:absolute;left:925px;top:262px;width:1px;height:42px;background:#c4c4c4"></div>
<div style="position:absolute;left:1060px;top:262px;width:1px;height:42px;background:#c4c4c4"></div>
<div style="position:absolute;left:1195px;top:262px;width:1px;height:42px;background:#c4c4c4"></div>
<div style="position:absolute;left:1319px;top:262px;width:1px;height:42px;background:#c4c4c4"></div>
<div style="position:absolute;left:343px;top:305px;width:13px;height:219px;background:#f4f4f4"></div>
<div style="position:absolute;left:359px;top:276.90px;font-size:13.70px;line-height:13.70px;color:#3a3a3a;white-space:nowrap;letter-spacing:-0.222px;">Tūnga</div>
<svg style="position:absolute;left:572.0px;top:273.5px" width="19" height="19" viewBox="0 0 19 19"><circle cx="9.5" cy="9.5" r="8.6" fill="none" stroke="#d2d2d2" stroke-width="1.3"/>
<path d="M4.6 5.8 Q9.5 4.2 14.4 5.8 L10.6 10.3 L10.2 15.2 L8.8 15.2 L8.4 10.3 Z" fill="#c2c2c2"/><ellipse cx="9.5" cy="5.9" rx="4.2" ry="1" fill="#d8d8d8"/></svg>
<div style="position:absolute;left:604px;top:276.90px;font-size:13.70px;line-height:13.70px;color:#3a3a3a;white-space:nowrap;letter-spacing:-0.206px;">Kaimahi kawenga</div>
<svg style="position:absolute;left:757.0px;top:273.5px" width="19" height="19" viewBox="0 0 19 19"><circle cx="9.5" cy="9.5" r="8.6" fill="none" stroke="#d2d2d2" stroke-width="1.3"/>
<path d="M4.6 5.8 Q9.5 4.2 14.4 5.8 L10.6 10.3 L10.2 15.2 L8.8 15.2 L8.4 10.3 Z" fill="#c2c2c2"/><ellipse cx="9.5" cy="5.9" rx="4.2" ry="1" fill="#d8d8d8"/></svg>
<div style="position:absolute;left:789px;top:276.90px;font-size:13.70px;line-height:13.70px;color:#3a3a3a;white-space:nowrap;letter-spacing:-0.182px;">He ra tono</div>
<svg style="position:absolute;left:896.0px;top:273.5px" width="19" height="19" viewBox="0 0 19 19"><circle cx="9.5" cy="9.5" r="8.6" fill="none" stroke="#d2d2d2" stroke-width="1.3"/>
<path d="M4.6 5.8 Q9.5 4.2 14.4 5.8 L10.6 10.3 L10.2 15.2 L8.8 15.2 L8.4 10.3 Z" fill="#c2c2c2"/><ellipse cx="9.5" cy="5.9" rx="4.2" ry="1" fill="#d8d8d8"/></svg>
<div style="position:absolute;left:928px;top:276.90px;font-size:13.70px;line-height:13.70px;color:#3a3a3a;white-space:nowrap;letter-spacing:-0.202px;">Kaihoko</div>
<svg style="position:absolute;left:1031.0px;top:273.5px" width="19" height="19" viewBox="0 0 19 19"><circle cx="9.5" cy="9.5" r="8.6" fill="none" stroke="#d2d2d2" stroke-width="1.3"/>
<path d="M4.6 5.8 Q9.5 4.2 14.4 5.8 L10.6 10.3 L10.2 15.2 L8.8 15.2 L8.4 10.3 Z" fill="#c2c2c2"/><ellipse cx="9.5" cy="5.9" rx="4.2" ry="1" fill="#d8d8d8"/></svg>
<svg style="position:absolute;left:1166.0px;top:273.5px" width="19" height="19" viewBox="0 0 19 19"><circle cx="9.5" cy="9.5" r="8.6" fill="none" stroke="#d2d2d2" stroke-width="1.3"/>
<path d="M4.6 5.8 Q9.5 4.2 14.4 5.8 L10.6 10.3 L10.2 15.2 L8.8 15.2 L8.4 10.3 Z" fill="#c2c2c2"/><ellipse cx="9.5" cy="5.9" rx="4.2" ry="1" fill="#d8d8d8"/></svg>
<div style="position:absolute;left:1198px;top:276.90px;font-size:13.70px;line-height:13.70px;color:#3a3a3a;white-space:nowrap;letter-spacing:-0.164px;">Te ara ki</div>
<svg style="position:absolute;left:1290.0px;top:273.5px" width="19" height="19" viewBox="0 0 19 19"><circle cx="9.5" cy="9.5" r="8.6" fill="none" stroke="#d2d2d2" stroke-width="1.3"/>
<path d="M4.6 5.8 Q9.5 4.2 14.4 5.8 L10.6 10.3 L10.2 15.2 L8.8 15.2 L8.4 10.3 Z" fill="#c2c2c2"/><ellipse cx="9.5" cy="5.9" rx="4.2" ry="1" fill="#d8d8d8"/></svg>
<div style="position:absolute;left:1322px;top:276.90px;font-size:13.70px;line-height:13.70px;color:#3a3a3a;white-space:nowrap;letter-spacing:-0.159px;">Ki te utu</div>
<svg style="position:absolute;left:1415.0px;top:273.5px" width="19" height="19" viewBox="0 0 19 19"><circle cx="9.5" cy="9.5" r="8.6" fill="none" stroke="#d2d2d2" stroke-width="1.3"/>
<path d="M4.6 5.8 Q9.5 4.2 14.4 5.8 L10.6 10.3 L10.2 15.2 L8.8 15.2 L8.4 10.3 Z" fill="#c2c2c2"/><ellipse cx="9.5" cy="5.9" rx="4.2" ry="1" fill="#d8d8d8"/></svg>
<div style="position:absolute;left:1063px;top:268.64px;font-size:13.18px;line-height:13.18px;color:#3a3a3a;white-space:nowrap;letter-spacing:-0.184px;">Tuhinga ka</div>
<div style="position:absolute;left:1063px;top:284.84px;font-size:13.18px;line-height:13.18px;color:#3a3a3a;white-space:nowrap;letter-spacing:-0.185px;">whai mai</div>
<div style="position:absolute;left:357px;top:305px;width:1087px;height:43px;background:#a4e5fb"></div>
<div style="position:absolute;left:343px;top:348px;width:1101px;height:1px;background:#c6c6c6"></div>
<div style="position:absolute;left:393.5px;top:319.90px;font-size:13.70px;line-height:13.70px;color:#333;white-space:nowrap;letter-spacing:-0.172px;">06. Kei te haere</div>
<div style="position:absolute;left:604px;top:319.90px;font-size:13.70px;line-height:13.70px;color:#333;white-space:nowrap;letter-spacing:-0.193px;">Kaimahi 2</div>
<div style="position:absolute;left:789px;top:319.90px;font-size:13.70px;line-height:13.70px;color:#333;white-space:nowrap;letter-spacing:0.057px;">05.11.2020</div>
<div style="position:absolute;left:928px;top:319.90px;font-size:13.70px;line-height:13.70px;color:#333;white-space:nowrap;letter-spacing:-0.193px;">Kaihoko 1</div>
<div style="position:absolute;left:1063px;top:319.90px;font-size:13.70px;line-height:13.70px;color:#333;white-space:nowrap;letter-spacing:-0.199px;">Taone 2</div>
<div style="position:absolute;left:1198px;top:319.90px;font-size:13.70px;line-height:13.70px;color:#333;white-space:nowrap;letter-spacing:-0.199px;">Taone 1</div>
<div style="position:absolute;right:44.5px;top:319.90px;font-size:13.70px;line-height:13.70px;color:#333;white-space:nowrap;text-align:right;letter-spacing:0.001px;margin-right:-0.001px;">590.00</div>
<div style="position:absolute;left:357px;top:349px;width:1087px;height:43px;background:#ffffff"></div>
<div style="position:absolute;left:343px;top:392px;width:1101px;height:1px;background:#c6c6c6"></div>
<div style="position:absolute;left:393.5px;top:363.90px;font-size:13.70px;line-height:13.70px;color:#e8232f;white-space:nowrap;letter-spacing:-0.204px;">13. Whakakahore Kape</div>
<div style="position:absolute;left:604px;top:363.90px;font-size:13.70px;line-height:13.70px;color:#e8232f;white-space:nowrap;letter-spacing:-0.193px;">Kaimahi 1</div>
<div style="position:absolute;left:789px;top:363.90px;font-size:13.70px;line-height:13.70px;color:#e8232f;white-space:nowrap;letter-spacing:0.057px;">09.11.2020</div>
<div style="position:absolute;left:928px;top:363.90px;font-size:13.70px;line-height:13.70px;color:#e8232f;white-space:nowrap;letter-spacing:-0.193px;">Kaihoko 2</div>
<div style="position:absolute;left:1063px;top:363.90px;font-size:13.70px;line-height:13.70px;color:#e8232f;white-space:nowrap;letter-spacing:-0.199px;">Taone 1</div>
<div style="position:absolute;left:1198px;top:363.90px;font-size:13.70px;line-height:13.70px;color:#e8232f;white-space:nowrap;letter-spacing:-0.199px;">Taone 2</div>
<div style="position:absolute;right:44.5px;top:363.90px;font-size:13.70px;line-height:13.70px;color:#e8232f;white-space:nowrap;text-align:right;letter-spacing:0.010px;margin-right:-0.010px;">2 500.00</div>
<div style="position:absolute;left:357px;top:393px;width:1087px;height:43px;background:#d6effc"></div>
<div style="position:absolute;left:343px;top:436px;width:1101px;height:1px;background:#c6c6c6"></div>
<div style="position:absolute;left:393.5px;top:407.90px;font-size:13.70px;line-height:13.70px;color:#333;white-space:nowrap;letter-spacing:-0.182px;">10. Kua tukuna mo te tuku</div>
<div style="position:absolute;left:604px;top:407.90px;font-size:13.70px;line-height:13.70px;color:#333;white-space:nowrap;letter-spacing:-0.193px;">Kaimahi 2</div>
<div style="position:absolute;left:789px;top:407.90px;font-size:13.70px;line-height:13.70px;color:#333;white-space:nowrap;letter-spacing:0.057px;">06.11.2020</div>
<div style="position:absolute;left:928px;top:407.90px;font-size:13.70px;line-height:13.70px;color:#333;white-space:nowrap;letter-spacing:-0.193px;">Kaihoko 2</div>
<div style="position:absolute;left:1063px;top:407.90px;font-size:13.70px;line-height:13.70px;color:#333;white-space:nowrap;letter-spacing:-0.199px;">Taone 1</div>
<div style="position:absolute;left:1198px;top:407.90px;font-size:13.70px;line-height:13.70px;color:#333;white-space:nowrap;letter-spacing:-0.199px;">Taone 3</div>
<div style="position:absolute;right:44.5px;top:407.90px;font-size:13.70px;line-height:13.70px;color:#333;white-space:nowrap;text-align:right;letter-spacing:0.010px;margin-right:-0.010px;">3 000.00</div>
<div style="position:absolute;left:357px;top:437px;width:1087px;height:42px;background:#d3ee6b"></div>
<div style="position:absolute;left:343px;top:479px;width:1101px;height:1px;background:#c6c6c6"></div>
<div style="position:absolute;left:393.5px;top:451.40px;font-size:13.70px;line-height:13.70px;color:#333;white-space:nowrap;letter-spacing:-0.179px;">05. Ka totohu</div>
<div style="position:absolute;left:604px;top:451.40px;font-size:13.70px;line-height:13.70px;color:#333;white-space:nowrap;letter-spacing:-0.193px;">Kaimahi 1</div>
<div style="position:absolute;left:789px;top:451.40px;font-size:13.70px;line-height:13.70px;color:#333;white-space:nowrap;letter-spacing:0.055px;">16.02.2021</div>
<div style="position:absolute;left:928px;top:451.40px;font-size:13.70px;line-height:13.70px;color:#333;white-space:nowrap;letter-spacing:-0.193px;">Kaihoko 3</div>
<div style="position:absolute;left:1063px;top:451.40px;font-size:13.70px;line-height:13.70px;color:#333;white-space:nowrap;letter-spacing:-0.199px;">Taone 1</div>
<div style="position:absolute;left:1198px;top:451.40px;font-size:13.70px;line-height:13.70px;color:#333;white-space:nowrap;letter-spacing:-0.199px;">Taone 2</div>
<div style="position:absolute;right:44.5px;top:451.40px;font-size:13.70px;line-height:13.70px;color:#333;white-space:nowrap;text-align:right;letter-spacing:0.010px;margin-right:-0.010px;">1 700.00</div>
<div style="position:absolute;left:357px;top:480px;width:1087px;height:43px;background:#ffffff"></div>
<div style="position:absolute;left:343px;top:523px;width:1101px;height:1px;background:#c6c6c6"></div>
<div style="position:absolute;left:393.5px;top:494.90px;font-size:13.70px;line-height:13.70px;color:#333;white-space:nowrap;letter-spacing:-0.174px;">12. He ota kua katia</div>
<div style="position:absolute;left:604px;top:494.90px;font-size:13.70px;line-height:13.70px;color:#333;white-space:nowrap;letter-spacing:-0.193px;">Kaimahi 1</div>
<div style="position:absolute;left:789px;top:494.90px;font-size:13.70px;line-height:13.70px;color:#333;white-space:nowrap;letter-spacing:0.057px;">02.11.2020</div>
<div style="position:absolute;left:928px;top:494.90px;font-size:13.70px;line-height:13.70px;color:#333;white-space:nowrap;letter-spacing:-0.193px;">Kaihoko 1</div>
<div style="position:absolute;left:1063px;top:494.90px;font-size:13.70px;line-height:13.70px;color:#333;white-space:nowrap;letter-spacing:-0.199px;">Taone 2</div>
<div style="position:absolute;left:1198px;top:494.90px;font-size:13.70px;line-height:13.70px;color:#333;white-space:nowrap;letter-spacing:-0.199px;">Taone 1</div>
<div style="position:absolute;right:44.5px;top:494.90px;font-size:13.70px;line-height:13.70px;color:#333;white-space:nowrap;text-align:right;letter-spacing:0.010px;margin-right:-0.010px;">1 250.00</div>
<div style="position:absolute;left:357px;top:305px;width:1087px;height:43px;border:1px dotted #6d4b4b"></div>
<svg style="position:absolute;left:347px;top:322px" width="6" height="10" viewBox="0 0 6 10"><path d="M0.5 0.5 L5 4.8 L0.5 9.2 Z" fill="#555"/></svg>
<div style="position:absolute;left:343px;top:561px;width:1101px;height:45px;background:#f4f4f4"></div>
<div style="position:absolute;left:343px;top:560px;width:1101px;height:1px;background:#c6c6c6"></div>
<div style="position:absolute;left:343px;top:605px;width:1120px;height:2px;background:#c0c0c0"></div>
<div style="position:absolute;left:1323px;top:564px;width:118px;height:38px;background:#fff;border:1px solid #cdcdcd;box-shadow:inset 0 0 0 1px #f0f0f0"></div>
<div style="position:absolute;right:52px;top:577.10px;font-size:13.70px;line-height:13.70px;color:#333;white-space:nowrap;text-align:right;letter-spacing:-0.040px;margin-right:0.040px;">9 040.00</div>
<div style="position:absolute;left:892px;top:611px;width:20px;height:1px;background:repeating-linear-gradient(to right,#8a8a8a 0 1px,transparent 1px 3px)"></div>
<div style="position:absolute;left:452px;top:620px;width:155px;height:43px;background:#f3f3f3;border:1px solid #c6c6c6;border-bottom:none"></div>
<svg style="position:absolute;left:466px;top:633px" width="15" height="17" viewBox="0 0 15 17"><rect x="0.5" y="0.5" width="14" height="16" rx="1.30" fill="#5a84c2"/>
<rect x="0.5" y="0.5" width="4.90" height="16" rx="1.30" fill="url(#gBookSp)"/>
<rect x="2.90" y="2.10" width="11.30" height="14.10" fill="url(#gBook)"/>
<rect x="2.90" y="0.65" width="11.30" height="1.15" fill="#e6ebf1"/></svg>
<div style="position:absolute;left:490px;top:635.82px;font-size:13.80px;line-height:13.80px;color:#555;white-space:nowrap;letter-spacing:-0.199px;">Nga teihana peke</div>
<div style="position:absolute;left:606px;top:620px;width:167px;height:43px;background:#f3f3f3;border:1px solid #c6c6c6;border-bottom:none"></div>
<svg style="position:absolute;left:620px;top:633px" width="15" height="17" viewBox="0 0 15 17"><rect x="0.5" y="0.5" width="14" height="16" rx="1.30" fill="#5a84c2"/>
<rect x="0.5" y="0.5" width="4.90" height="16" rx="1.30" fill="url(#gBookSp)"/>
<rect x="2.90" y="2.10" width="11.30" height="14.10" fill="url(#gBook)"/>
<rect x="2.90" y="0.65" width="11.30" height="1.15" fill="#e6ebf1"/></svg>
<div style="position:absolute;left:644px;top:635.82px;font-size:13.80px;line-height:13.80px;color:#555;white-space:nowrap;letter-spacing:-0.207px;">Nga whakawhitinga</div>
<div style="position:absolute;left:772px;top:620px;width:135px;height:43px;background:#f3f3f3;border:1px solid #c6c6c6;border-bottom:none"></div>
<svg style="position:absolute;left:786px;top:633px" width="15" height="17" viewBox="0 0 15 17"><rect x="0.5" y="0.5" width="14" height="16" rx="1.30" fill="#5a84c2"/>
<rect x="0.5" y="0.5" width="4.90" height="16" rx="1.30" fill="url(#gBookSp)"/>
<rect x="2.90" y="2.10" width="11.30" height="14.10" fill="url(#gBook)"/>
<rect x="2.90" y="0.65" width="11.30" height="1.15" fill="#e6ebf1"/></svg>
<div style="position:absolute;left:810px;top:635.82px;font-size:13.80px;line-height:13.80px;color:#555;white-space:nowrap;letter-spacing:-0.167px;">Hei utu taapiri</div>
<div style="position:absolute;left:906px;top:620px;width:77px;height:43px;background:#f3f3f3;border:1px solid #c6c6c6;border-bottom:none"></div>
<svg style="position:absolute;left:920px;top:633px" width="15" height="17" viewBox="0 0 15 17"><rect x="0.5" y="0.5" width="14" height="16" rx="1.30" fill="#5a84c2"/>
<rect x="0.5" y="0.5" width="4.90" height="16" rx="1.30" fill="url(#gBookSp)"/>
<rect x="2.90" y="2.10" width="11.30" height="14.10" fill="url(#gBook)"/>
<rect x="2.90" y="0.65" width="11.30" height="1.15" fill="#e6ebf1"/></svg>
<div style="position:absolute;left:944px;top:635.82px;font-size:13.80px;line-height:13.80px;color:#555;white-space:nowrap;letter-spacing:-0.186px;">Utu.</div>
<div style="position:absolute;left:982px;top:620px;width:104px;height:43px;background:#f3f3f3;border:1px solid #c6c6c6;border-bottom:none"></div>
<svg style="position:absolute;left:996px;top:633px" width="15" height="17" viewBox="0 0 15 17"><rect x="0.5" y="0.5" width="14" height="16" rx="1.30" fill="#5a84c2"/>
<rect x="0.5" y="0.5" width="4.90" height="16" rx="1.30" fill="url(#gBookSp)"/>
<rect x="2.90" y="2.10" width="11.30" height="14.10" fill="url(#gBook)"/>
<rect x="2.90" y="0.65" width="11.30" height="1.15" fill="#e6ebf1"/></svg>
<div style="position:absolute;left:1020px;top:635.82px;font-size:13.80px;line-height:13.80px;color:#555;white-space:nowrap;letter-spacing:-0.196px;">Tuhinga.</div>
<div style="position:absolute;left:1085px;top:620px;width:128px;height:43px;background:#f3f3f3;border:1px solid #c6c6c6;border-bottom:none"></div>
<svg style="position:absolute;left:1099px;top:633px" width="15" height="17" viewBox="0 0 15 17"><rect x="0.5" y="0.5" width="14" height="16" rx="1.30" fill="#5a84c2"/>
<rect x="0.5" y="0.5" width="4.90" height="16" rx="1.30" fill="url(#gBookSp)"/>
<rect x="2.90" y="2.10" width="11.30" height="14.10" fill="url(#gBook)"/>
<rect x="2.90" y="0.65" width="11.30" height="1.15" fill="#e6ebf1"/></svg>
<div style="position:absolute;left:1123px;top:635.82px;font-size:13.80px;line-height:13.80px;color:#555;white-space:nowrap;letter-spacing:-0.201px;">Rarangi mahi</div>
<div style="position:absolute;left:1212px;top:620px;width:121px;height:43px;background:#f3f3f3;border:1px solid #c6c6c6;border-bottom:none"></div>
<svg style="position:absolute;left:1226px;top:633px" width="15" height="17" viewBox="0 0 15 17"><rect x="0.5" y="0.5" width="14" height="16" rx="1.30" fill="#5a84c2"/>
<rect x="0.5" y="0.5" width="4.90" height="16" rx="1.30" fill="url(#gBookSp)"/>
<rect x="2.90" y="2.10" width="11.30" height="14.10" fill="url(#gBook)"/>
<rect x="2.90" y="0.65" width="11.30" height="1.15" fill="#e6ebf1"/></svg>
<div style="position:absolute;left:1250px;top:635.82px;font-size:13.80px;line-height:13.80px;color:#555;white-space:nowrap;letter-spacing:-0.212px;">Nga Tūnga.</div>
<div style="position:absolute;left:343px;top:662px;width:1121px;height:240px;border:1px solid #c9c9c9;border-top:none;background:#fff"></div>
<div style="position:absolute;left:452px;top:662px;width:1012px;height:1px;background:#c6c6c6"></div>
<div style="position:absolute;left:343px;top:618px;width:110px;height:45px;background:#fff;border-left:1px solid #c6c6c6;border-right:1px solid #c6c6c6"></div>
<div style="position:absolute;left:343px;top:618px;width:110px;height:2px;background:#1a9be8"></div>
<svg style="position:absolute;left:357px;top:632px" width="15" height="17" viewBox="0 0 15 17"><rect x="0.5" y="0.5" width="14" height="16" rx="1.30" fill="#5a84c2"/>
<rect x="0.5" y="0.5" width="4.90" height="16" rx="1.30" fill="url(#gBookSp)"/>
<rect x="2.90" y="2.10" width="11.30" height="14.10" fill="url(#gBook)"/>
<rect x="2.90" y="0.65" width="11.30" height="1.15" fill="#e6ebf1"/></svg>
<div style="position:absolute;left:382px;top:635.82px;font-size:13.80px;line-height:13.80px;color:#1e9ae6;white-space:nowrap;letter-spacing:-0.221px;">Nga Wahi</div>
<div style="position:absolute;left:345px;top:664px;width:1117px;height:235px;border:1px solid #d0d0d0;border-top:1px solid #d8d8d8;background:#fff"></div>
<div style="position:absolute;left:354px;top:681.40px;font-size:13.70px;line-height:13.70px;color:#b3b3b3;white-space:nowrap;letter-spacing:-0.179px;">Tōia he tīwae pane ki konei hei whakarōpū mā reira</div>
<div style="position:absolute;left:346px;top:709px;width:1098px;height:43px;background:#f4f4f4"></div>
<div style="position:absolute;left:346px;top:708px;width:1098px;height:2px;background:#b7b7b7"></div>
<div style="position:absolute;left:346px;top:751px;width:1098px;height:1px;background:#c4c4c4"></div>
<div style="position:absolute;left:1444px;top:709px;width:1px;height:87px;background:#c4c4c4"></div>
<div style="position:absolute;left:359px;top:710px;width:1px;height:86px;background:#c4c4c4"></div>
<div style="position:absolute;left:600px;top:710px;width:1px;height:41px;background:#c4c4c4"></div>
<div style="position:absolute;left:745px;top:710px;width:1px;height:41px;background:#c4c4c4"></div>
<div style="position:absolute;left:875px;top:710px;width:1px;height:41px;background:#c4c4c4"></div>
<div style="position:absolute;left:1013px;top:710px;width:1px;height:41px;background:#c4c4c4"></div>
<div style="position:absolute;left:1145px;top:710px;width:1px;height:41px;background:#c4c4c4"></div>
<div style="position:absolute;left:1292px;top:710px;width:1px;height:41px;background:#c4c4c4"></div>
<div style="position:absolute;left:361.5px;top:724.90px;font-size:13.70px;line-height:13.70px;color:#3a3a3a;white-space:nowrap;letter-spacing:-0.221px;">Momo waahi</div>
<svg style="position:absolute;left:571.0px;top:721.5px" width="19" height="19" viewBox="0 0 19 19"><circle cx="9.5" cy="9.5" r="8.6" fill="none" stroke="#d2d2d2" stroke-width="1.3"/>
<path d="M4.6 5.8 Q9.5 4.2 14.4 5.8 L10.6 10.3 L10.2 15.2 L8.8 15.2 L8.4 10.3 Z" fill="#c2c2c2"/><ellipse cx="9.5" cy="5.9" rx="4.2" ry="1" fill="#d8d8d8"/></svg>
<div style="position:absolute;left:603px;top:724.90px;font-size:13.70px;line-height:13.70px;color:#3a3a3a;white-space:nowrap;letter-spacing:-0.181px;">Te roa, m</div>
<svg style="position:absolute;left:716.0px;top:721.5px" width="19" height="19" viewBox="0 0 19 19"><circle cx="9.5" cy="9.5" r="8.6" fill="none" stroke="#d2d2d2" stroke-width="1.3"/>
<path d="M4.6 5.8 Q9.5 4.2 14.4 5.8 L10.6 10.3 L10.2 15.2 L8.8 15.2 L8.4 10.3 Z" fill="#c2c2c2"/><ellipse cx="9.5" cy="5.9" rx="4.2" ry="1" fill="#d8d8d8"/></svg>
<div style="position:absolute;left:748px;top:724.90px;font-size:13.70px;line-height:13.70px;color:#3a3a3a;white-space:nowrap;letter-spacing:-0.207px;">Whanui, m</div>
<svg style="position:absolute;left:846.0px;top:721.5px" width="19" height="19" viewBox="0 0 19 19"><circle cx="9.5" cy="9.5" r="8.6" fill="none" stroke="#d2d2d2" stroke-width="1.3"/>
<path d="M4.6 5.8 Q9.5 4.2 14.4 5.8 L10.6 10.3 L10.2 15.2 L8.8 15.2 L8.4 10.3 Z" fill="#c2c2c2"/><ellipse cx="9.5" cy="5.9" rx="4.2" ry="1" fill="#d8d8d8"/></svg>
<div style="position:absolute;left:878px;top:724.90px;font-size:13.70px;line-height:13.70px;color:#3a3a3a;white-space:nowrap;letter-spacing:-0.162px;">Teitei, m</div>
<svg style="position:absolute;left:984.0px;top:721.5px" width="19" height="19" viewBox="0 0 19 19"><circle cx="9.5" cy="9.5" r="8.6" fill="none" stroke="#d2d2d2" stroke-width="1.3"/>
<path d="M4.6 5.8 Q9.5 4.2 14.4 5.8 L10.6 10.3 L10.2 15.2 L8.8 15.2 L8.4 10.3 Z" fill="#c2c2c2"/><ellipse cx="9.5" cy="5.9" rx="4.2" ry="1" fill="#d8d8d8"/></svg>
<div style="position:absolute;left:1016px;top:724.90px;font-size:13.70px;line-height:13.70px;color:#3a3a3a;white-space:nowrap;letter-spacing:-0.210px;">Tapeke</div>
<svg style="position:absolute;left:1116.0px;top:721.5px" width="19" height="19" viewBox="0 0 19 19"><circle cx="9.5" cy="9.5" r="8.6" fill="none" stroke="#d2d2d2" stroke-width="1.3"/>
<path d="M4.6 5.8 Q9.5 4.2 14.4 5.8 L10.6 10.3 L10.2 15.2 L8.8 15.2 L8.4 10.3 Z" fill="#c2c2c2"/><ellipse cx="9.5" cy="5.9" rx="4.2" ry="1" fill="#d8d8d8"/></svg>
<div style="position:absolute;left:1148px;top:724.90px;font-size:13.70px;line-height:13.70px;color:#3a3a3a;white-space:nowrap;letter-spacing:-0.203px;">Taumaha, kg</div>
<svg style="position:absolute;left:1263.0px;top:721.5px" width="19" height="19" viewBox="0 0 19 19"><circle cx="9.5" cy="9.5" r="8.6" fill="none" stroke="#d2d2d2" stroke-width="1.3"/>
<path d="M4.6 5.8 Q9.5 4.2 14.4 5.8 L10.6 10.3 L10.2 15.2 L8.8 15.2 L8.4 10.3 Z" fill="#c2c2c2"/><ellipse cx="9.5" cy="5.9" rx="4.2" ry="1" fill="#d8d8d8"/></svg>
<div style="position:absolute;left:1295px;top:724.90px;font-size:13.70px;line-height:13.70px;color:#3a3a3a;white-space:nowrap;letter-spacing:-0.176px;">rōrahi, m3</div>
<svg style="position:absolute;left:1415.0px;top:721.5px" width="19" height="19" viewBox="0 0 19 19"><circle cx="9.5" cy="9.5" r="8.6" fill="none" stroke="#d2d2d2" stroke-width="1.3"/>
<path d="M4.6 5.8 Q9.5 4.2 14.4 5.8 L10.6 10.3 L10.2 15.2 L8.8 15.2 L8.4 10.3 Z" fill="#c2c2c2"/><ellipse cx="9.5" cy="5.9" rx="4.2" ry="1" fill="#d8d8d8"/></svg>
<div style="position:absolute;left:346px;top:752px;width:13px;height:43px;background:#f4f4f4"></div>
<div style="position:absolute;left:360px;top:752px;width:1084px;height:43px;background:#d8f0fc"></div>
<div style="position:absolute;left:346px;top:795px;width:1098px;height:1px;background:#c6c6c6"></div>
<svg style="position:absolute;left:349px;top:769px" width="6" height="10" viewBox="0 0 6 10"><path d="M0.5 0.5 L5 4.8 L0.5 9.2 Z" fill="#555"/></svg>
<div style="position:absolute;left:395px;top:766.90px;font-size:13.70px;line-height:13.70px;color:#333;white-space:nowrap;letter-spacing:-0.221px;">Pouaka</div>
<div style="position:absolute;right:743.5px;top:766.90px;font-size:13.70px;line-height:13.70px;color:#333;white-space:nowrap;text-align:right;letter-spacing:0.005px;margin-right:-0.005px;">1.000</div>
<div style="position:absolute;right:613.5px;top:766.90px;font-size:13.70px;line-height:13.70px;color:#333;white-space:nowrap;text-align:right;letter-spacing:0.005px;margin-right:-0.005px;">2.000</div>
<div style="position:absolute;right:475.5px;top:766.90px;font-size:13.70px;line-height:13.70px;color:#333;white-space:nowrap;text-align:right;letter-spacing:0.005px;margin-right:-0.005px;">0.500</div>
<div style="position:absolute;right:343.5px;top:766.90px;font-size:13.70px;line-height:13.70px;color:#333;white-space:nowrap;text-align:right;letter-spacing:-0.017px;margin-right:0.017px;">1</div>
<div style="position:absolute;right:196.5px;top:766.90px;font-size:13.70px;line-height:13.70px;color:#333;white-space:nowrap;text-align:right;letter-spacing:0.005px;margin-right:-0.005px;">3.000</div>
<div style="position:absolute;right:44.5px;top:766.90px;font-size:13.70px;line-height:13.70px;color:#333;white-space:nowrap;text-align:right;letter-spacing:0.005px;margin-right:-0.005px;">1.000</div>
<div style="position:absolute;left:346px;top:852px;width:1098px;height:46px;background:#f4f4f4"></div>
<div style="position:absolute;left:346px;top:852px;width:1098px;height:1px;background:#c6c6c6"></div>
<div style="position:absolute;left:346px;top:897px;width:1115px;height:2px;background:#c0c0c0"></div>
<div style="position:absolute;left:1016px;top:855px;width:127px;height:39px;background:#fff;border:1px solid #cdcdcd"></div>
<div style="position:absolute;right:350px;top:867.80px;font-size:13.70px;line-height:13.70px;color:#333;white-space:nowrap;text-align:right;letter-spacing:-0.067px;margin-right:0.067px;">1</div>
<div style="position:absolute;left:1147px;top:855px;width:143px;height:39px;background:#fff;border:1px solid #cdcdcd"></div>
<div style="position:absolute;right:203px;top:867.80px;font-size:13.70px;line-height:13.70px;color:#333;white-space:nowrap;text-align:right;letter-spacing:-0.045px;margin-right:0.045px;">3.000</div>
<div style="position:absolute;left:1294px;top:855px;width:147px;height:39px;background:#fff;border:1px solid #cdcdcd"></div>
<div style="position:absolute;right:52px;top:867.80px;font-size:13.70px;line-height:13.70px;color:#333;white-space:nowrap;text-align:right;letter-spacing:-0.045px;margin-right:0.045px;">1.000</div>
<div style="position:absolute;left:22px;top:901px;width:1442px;height:2px;background:#c2c2c2"></div>
<div style="position:absolute;left:586px;top:905px;width:878px;height:1px;background:#cfcfcf"></div>
<div style="position:absolute;left:1463px;top:662px;width:1px;height:244px;background:#c9c9c9"></div>
<div style="position:absolute;left:24px;top:902px;width:155px;height:53px;background:#f3f3f3;border:1px solid #c6c6c6;border-top:none"></div>
<svg style="position:absolute;left:40px;top:911px" width="30" height="34" viewBox="0 0 30 34"><rect x="0.5" y="0.5" width="29" height="33" rx="2.60" fill="#5a84c2"/>
<rect x="0.5" y="0.5" width="7.80" height="33" rx="2.60" fill="url(#gBookSp)"/>
<rect x="5.80" y="4.20" width="22.60" height="28.20" fill="url(#gBook)"/>
<rect x="5.80" y="1.30" width="22.60" height="2.30" fill="#e6ebf1"/></svg>
<div style="position:absolute;left:82px;top:922.09px;font-size:13.60px;line-height:13.60px;color:#555;white-space:nowrap;letter-spacing:-0.202px;">Kaihoko</div>
<div style="position:absolute;left:142.5px;top:919px;width:19px;height:19px;background:#fff"></div>
<svg style="position:absolute;left:146.5px;top:924px" width="11" height="9" viewBox="0 0 11 9"><path d="M1 0.8 L10 8.2 M10 0.8 L1 8.2" stroke="#1e96e2" stroke-width="2.2"/></svg>
<div style="position:absolute;left:178px;top:902px;width:140px;height:53px;background:#f3f3f3;border:1px solid #c6c6c6;border-top:none"></div>
<svg style="position:absolute;left:194px;top:911px" width="30" height="34" viewBox="0 0 30 34"><rect x="0.5" y="0.5" width="29" height="33" rx="2.60" fill="#5a84c2"/>
<rect x="0.5" y="0.5" width="7.80" height="33" rx="2.60" fill="url(#gBookSp)"/>
<rect x="5.80" y="4.20" width="22.60" height="28.20" fill="url(#gBook)"/>
<rect x="5.80" y="1.30" width="22.60" height="2.30" fill="#e6ebf1"/></svg>
<div style="position:absolute;left:236px;top:922.09px;font-size:13.60px;line-height:13.60px;color:#555;white-space:nowrap;letter-spacing:-0.222px;">Mēra</div>
<div style="position:absolute;left:282px;top:919px;width:19px;height:19px;background:#fff"></div>
<svg style="position:absolute;left:286px;top:924px" width="11" height="9" viewBox="0 0 11 9"><path d="M1 0.8 L10 8.2 M10 0.8 L1 8.2" stroke="#1e96e2" stroke-width="2.2"/></svg>
<div style="position:absolute;left:317px;top:902px;width:137px;height:53px;background:#f3f3f3;border:1px solid #c6c6c6;border-top:none"></div>
<svg style="position:absolute;left:333px;top:911px" width="30" height="34" viewBox="0 0 30 34"><rect x="0.5" y="0.5" width="29" height="33" rx="2.60" fill="#5a84c2"/>
<rect x="0.5" y="0.5" width="7.80" height="33" rx="2.60" fill="url(#gBookSp)"/>
<rect x="5.80" y="4.20" width="22.60" height="28.20" fill="url(#gBook)"/>
<rect x="5.80" y="1.30" width="22.60" height="2.30" fill="#e6ebf1"/></svg>
<div style="position:absolute;left:375px;top:922.09px;font-size:13.60px;line-height:13.60px;color:#555;white-space:nowrap;letter-spacing:-0.212px;">Moni</div>
<div style="position:absolute;left:417px;top:919px;width:19px;height:19px;background:#fff"></div>
<svg style="position:absolute;left:421px;top:924px" width="11" height="9" viewBox="0 0 11 9"><path d="M1 0.8 L10 8.2 M10 0.8 L1 8.2" stroke="#1e96e2" stroke-width="2.2"/></svg>
<div style="position:absolute;left:178px;top:902px;width:2px;height:52px;background:#c6c6c6"></div>
<div style="position:absolute;left:317px;top:902px;width:2px;height:52px;background:#c6c6c6"></div>
<div style="position:absolute;left:453px;top:902px;width:133px;height:53px;background:#fff;border-left:1px solid #c6c6c6;border-right:1px solid #c6c6c6"></div>
<div style="position:absolute;left:453px;top:955px;width:133px;height:2px;background:#17a0ea"></div>
<svg style="position:absolute;left:470px;top:912px" width="30" height="34" viewBox="0 0 30 34"><rect x="0.5" y="0.5" width="29" height="33" rx="2.60" fill="#5a84c2"/>
<rect x="0.5" y="0.5" width="7.80" height="33" rx="2.60" fill="url(#gBookSp)"/>
<rect x="5.80" y="4.20" width="22.60" height="28.20" fill="url(#gBook)"/>
<rect x="5.80" y="1.30" width="22.60" height="2.30" fill="#e6ebf1"/></svg>
<div style="position:absolute;left:512px;top:923.49px;font-size:13.60px;line-height:13.60px;color:#1e9ae6;white-space:nowrap;letter-spacing:-0.210px;">Ota</div>
<svg style="position:absolute;left:554px;top:926px" width="11" height="9" viewBox="0 0 11 9"><path d="M1 0.8 L10 8.2 M10 0.8 L1 8.2" stroke="#1e96e2" stroke-width="2.2"/></svg>
<svg style="position:absolute;left:29px;top:960px" width="20" height="20" viewBox="0 0 20 20"><circle cx="10" cy="10" r="9.6" fill="#3f82c4"/><rect x="8.4" y="8" width="3.2" height="7.5" fill="#fff"/><circle cx="10" cy="5.3" r="1.7" fill="#fff"/></svg>
<div style="position:absolute;left:70px;top:964.49px;font-size:14.42px;line-height:14.42px;color:#333;white-space:nowrap;letter-spacing:-0.275px;">7.2.9052.10 Standard</div>
<div style="position:absolute;left:229px;top:962px;width:1px;height:18px;background:#bdbdbd"></div>
<svg style="position:absolute;left:243px;top:960px" width="17" height="20" viewBox="0 0 17 20"><defs><linearGradient id="gDb" x1="0" y1="0" x2="1" y2="0"><stop offset="0" stop-color="#e7a04a"/><stop offset="0.45" stop-color="#fde0a8"/><stop offset="1" stop-color="#d98a30"/></linearGradient></defs><path d="M0.5 3.5 V16.5 Q8.5 20.5 16.5 16.5 V3.5 Z" fill="url(#gDb)" stroke="#b8752a" stroke-width="0.8"/><ellipse cx="8.5" cy="3.5" rx="8" ry="3" fill="#fbe6b8" stroke="#b8752a" stroke-width="0.8"/><path d="M0.5 8 Q8.5 11 16.5 8 M0.5 12.5 Q8.5 15.5 16.5 12.5" stroke="#c98a3a" stroke-width="0.8" fill="none"/></svg>
<div style="position:absolute;left:282px;top:964.49px;font-size:14.42px;line-height:14.42px;color:#333;white-space:nowrap;letter-spacing:-0.167px;">localhost (utf8)</div>
<div style="position:absolute;left:399px;top:962px;width:1px;height:18px;background:#bdbdbd"></div>
<svg style="position:absolute;left:411px;top:960px" width="20" height="20" viewBox="0 0 20 20"><circle cx="10" cy="6.8" r="5.4" fill="#f3d1ad" stroke="#b77a45" stroke-width="0.8"/><path d="M4.6 6.8 Q4.8 1 10 1 Q15.2 1 15.4 6.8 Q13.5 3.8 10 3.8 Q6.5 3.8 4.6 6.8 Z" fill="#c06a30"/><path d="M1 19.5 Q1.5 12 10 11.8 Q18.5 12 19 19.5 Z" fill="#7dbf45" stroke="#4f8f2a" stroke-width="0.8"/></svg>
<div style="position:absolute;left:452px;top:965.37px;font-size:13.39px;line-height:13.39px;color:#333;white-space:nowrap;letter-spacing:-0.256px;transform:scaleY(1.07);transform-origin:0 100%">NIKOLAY (MAIN)</div>
<div style="position:absolute;left:578px;top:962px;width:1px;height:18px;background:#bdbdbd"></div>
<svg style="position:absolute;left:591px;top:961px" width="18" height="19" viewBox="0 0 18 19"><rect x="0.5" y="1.5" width="17" height="17" fill="#fff" stroke="#7d8fb8" stroke-width="1"/><rect x="0.5" y="0.5" width="17" height="4.5" fill="#e0504a"/><text x="9" y="16" font-size="10" font-weight="bold" text-anchor="middle" fill="#3a4f80" font-family="Liberation Sans">31</text></svg>
<div style="position:absolute;left:632px;top:964.49px;font-size:14.42px;line-height:14.42px;color:#333;white-space:nowrap;letter-spacing:-0.353px;">13.09.2024</div>
<div style="position:absolute;left:727px;top:962px;width:1px;height:18px;background:#bdbdbd"></div>
<div style="position:absolute;left:761px;top:964.49px;font-size:14.42px;line-height:14.42px;color:#333;white-space:nowrap;letter-spacing:-0.198px;">00:00:00:222</div>
<div style="position:absolute;left:875px;top:962px;width:1px;height:18px;background:#bdbdbd"></div>
<div style="position:absolute;left:1433px;top:961px;width:1px;height:19px;background:#c8c8c8"></div>
<svg style="position:absolute;left:1459px;top:967px" width="4" height="4" viewBox="0 0 4 4"><path d="M2 0 L4 2 L2 4 L0 2 Z" fill="#666"/></svg>
<svg style="position:absolute;left:1454px;top:972px" width="4" height="4" viewBox="0 0 4 4"><path d="M2 0 L4 2 L2 4 L0 2 Z" fill="#666"/></svg>
<svg style="position:absolute;left:1459px;top:972px" width="4" height="4" viewBox="0 0 4 4"><path d="M2 0 L4 2 L2 4 L0 2 Z" fill="#666"/></svg>
<svg style="position:absolute;left:1449px;top:977px" width="4" height="4" viewBox="0 0 4 4"><path d="M2 0 L4 2 L2 4 L0 2 Z" fill="#666"/></svg>
<svg style="position:absolute;left:1454px;top:977px" width="4" height="4" viewBox="0 0 4 4"><path d="M2 0 L4 2 L2 4 L0 2 Z" fill="#666"/></svg>
<svg style="position:absolute;left:1459px;top:977px" width="4" height="4" viewBox="0 0 4 4"><path d="M2 0 L4 2 L2 4 L0 2 Z" fill="#666"/></svg>
</body></html>
